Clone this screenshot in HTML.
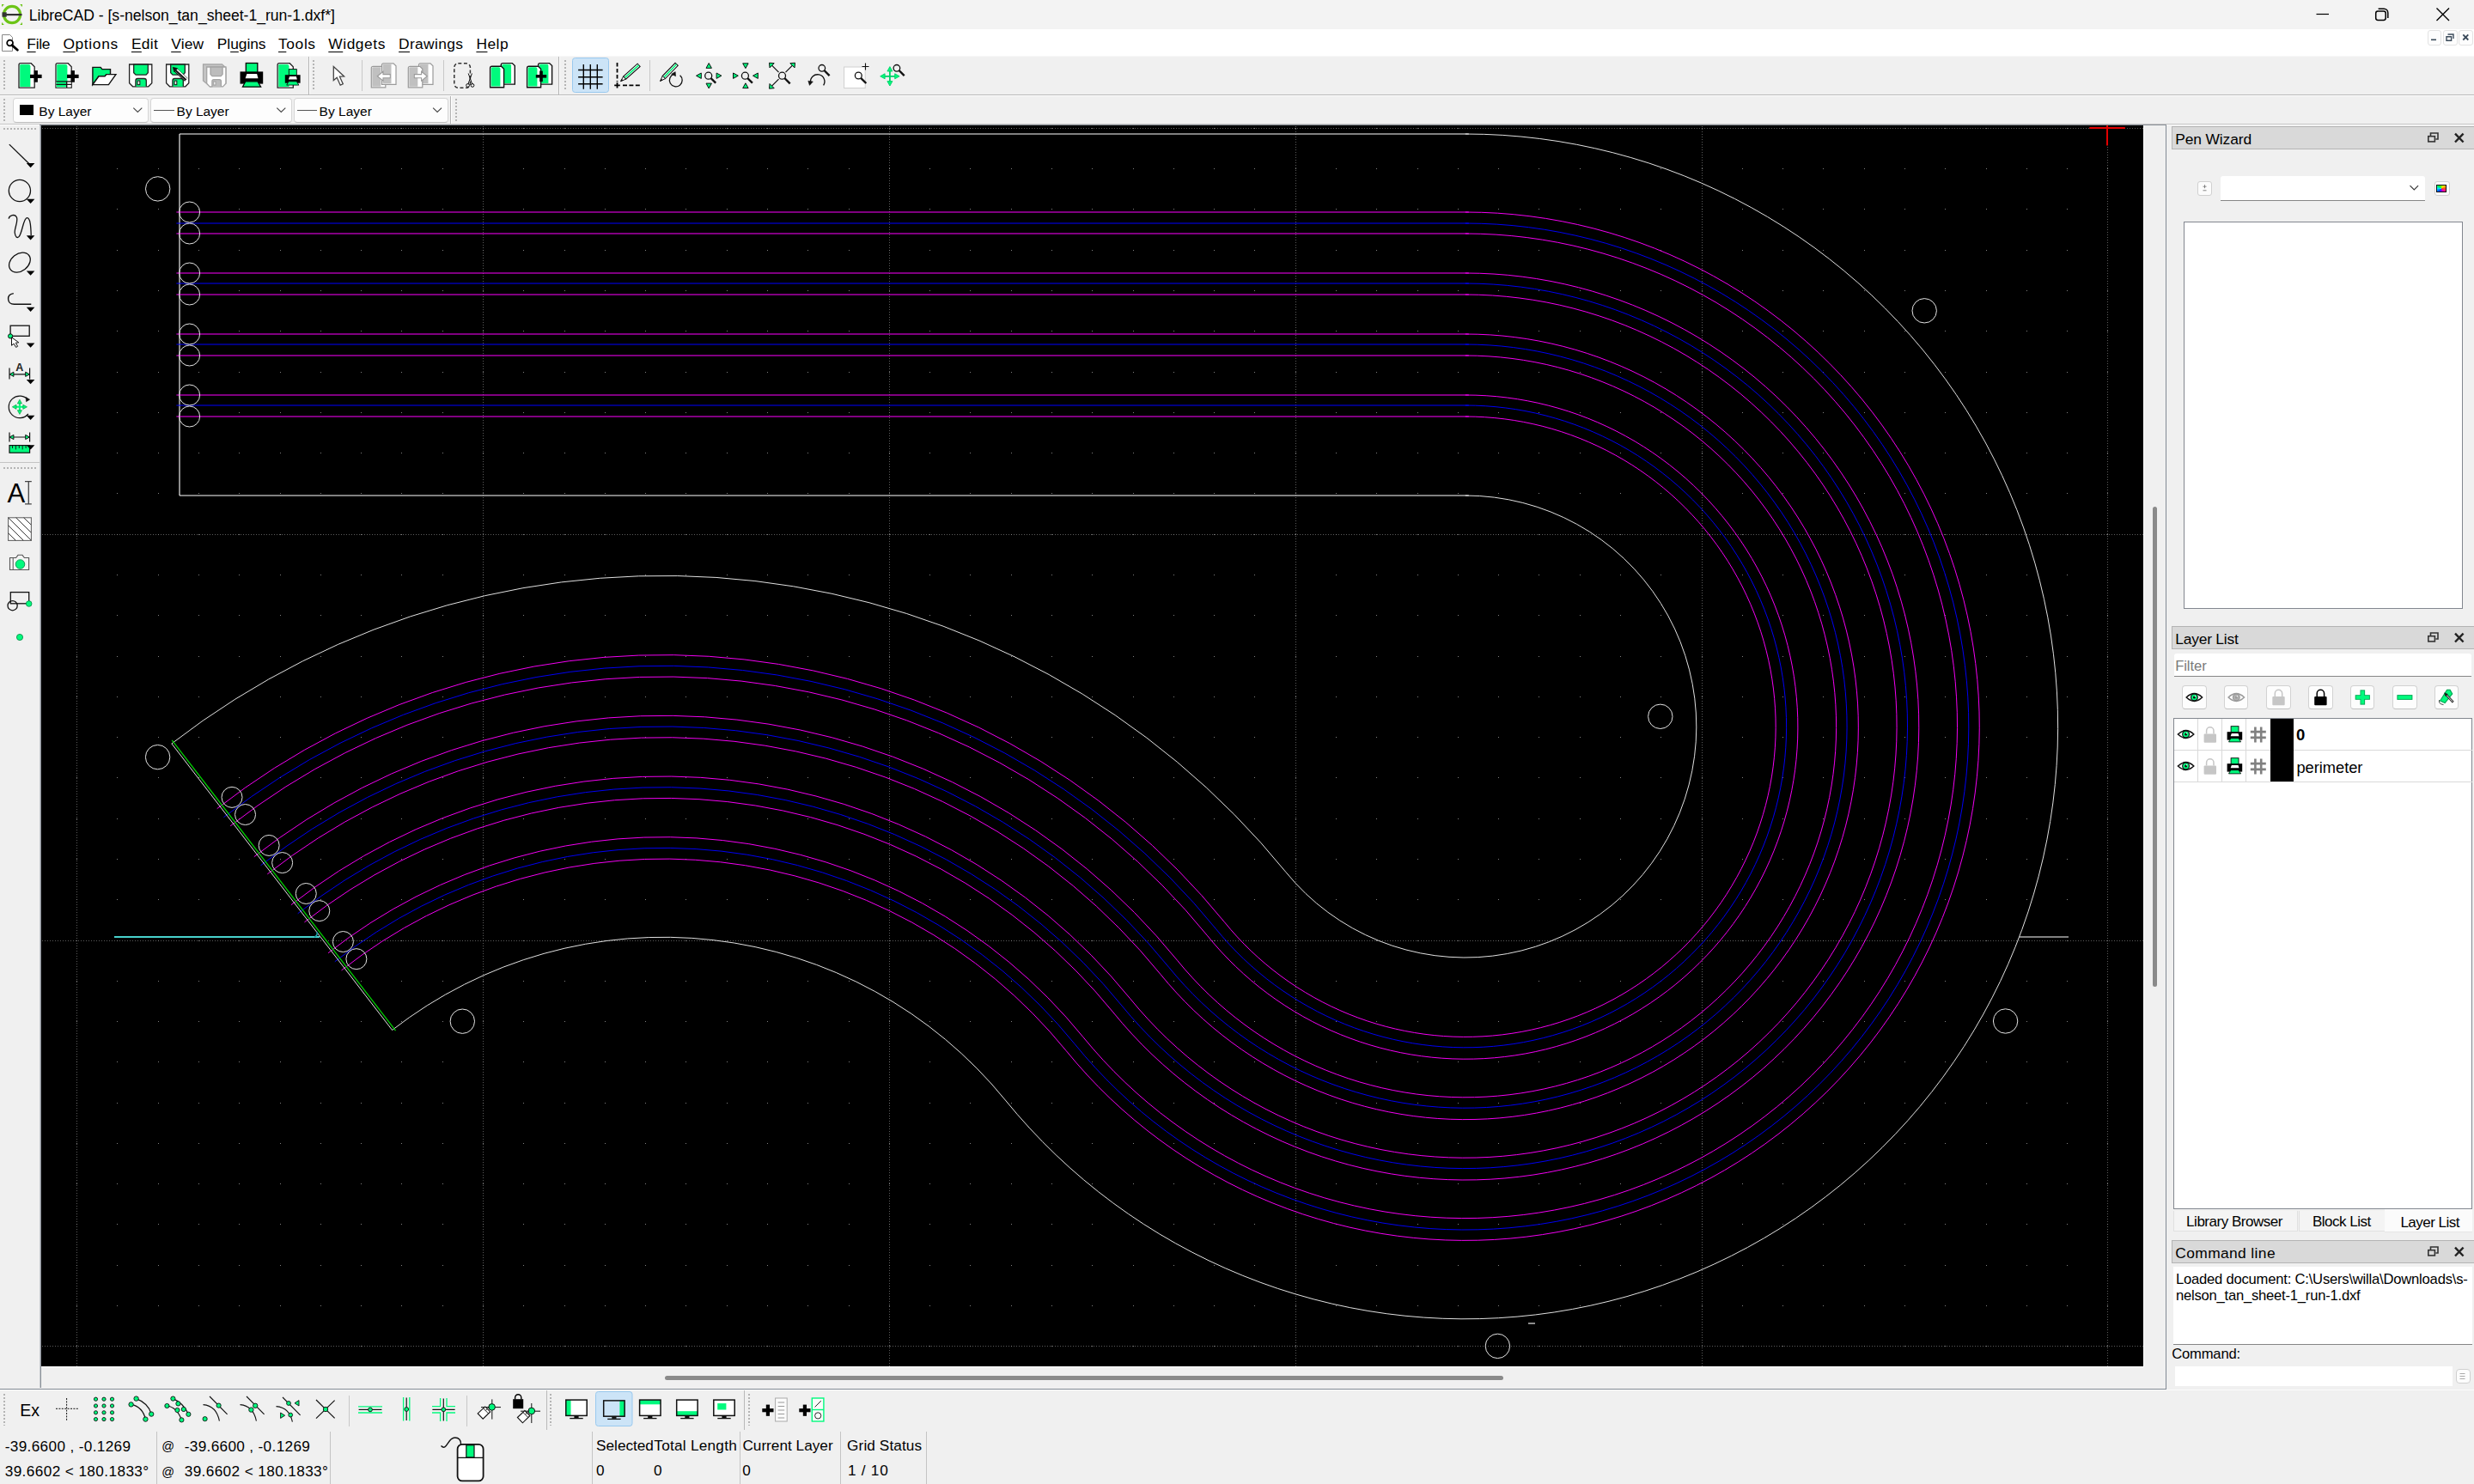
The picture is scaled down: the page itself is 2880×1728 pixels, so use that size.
<!DOCTYPE html>
<html><head><meta charset="utf-8"><title>LibreCAD</title>
<style>
html,body{margin:0;padding:0;overflow:hidden}
body{width:2880px;height:1728px;overflow:hidden;background:#f0f0f0;font-family:"Liberation Sans",sans-serif;font-size:17px;color:#000;position:relative}
.a{position:absolute;box-sizing:content-box}
.t{position:absolute;white-space:nowrap;line-height:1}
svg{position:absolute;overflow:visible}
</style></head><body>
<div class="a" style="left:0px;top:0px;width:2880px;height:34px;background:#f3f3f3"></div>
<svg style="left:2px;top:5px" width="24" height="24" viewBox="0 0 24 24"><circle cx="12" cy="12" r="9.6" fill="#f3f3f3" stroke="#6cc417" stroke-width="3.2"/><path d="M0 0h2.4v1.2H1.2v1.2H0zM24 0h-2.4v1.2h1.2v1.2H24zM0 24h2.4v-1.2H1.2v-1.2H0zM24 24h-2.4v-1.2h1.2v-1.2H24z" fill="#6cc417"/><rect x="0.5" y="9.3" width="5.2" height="5.4" fill="#333"/><rect x="4" y="11" width="19.5" height="2.2" fill="#333"/></svg>
<div class="t" style="left:33.8px;top:10.0px;font-size:17.6px;letter-spacing:-0.019px;">LibreCAD - [s-nelson_tan_sheet-1_run-1.dxf*]</div>
<svg style="left:2680px;top:0px" width="200" height="34" viewBox="0 0 200 34"><path d="M16.5 16.5H31" stroke="#000" stroke-width="1.2" fill="none"/><rect x="85.7" y="13" width="11.5" height="10.5" rx="2.4" fill="none" stroke="#000" stroke-width="1.5"/><path d="M88.6 10.3h6.6a4.6 4.6 0 0 1 4.6 4.6v6.2" fill="none" stroke="#000" stroke-width="1.5"/><path d="M156.5 9.5L171 24M171 9.5L156.5 24" stroke="#000" stroke-width="1.4" fill="none"/></svg>
<div class="a" style="left:0px;top:34px;width:2880px;height:31px;background:#fff"></div>
<div class="a" style="left:0px;top:65px;width:2880px;height:1px;background:#f7f7f7"></div>
<svg style="left:0px;top:38px" width="24" height="24" viewBox="0 0 24 24"><path d="M2.5 2.5h9l3 3v16h-12z" fill="#fff" stroke="#888" stroke-width="1"/><circle cx="11.6" cy="12" r="3.4" fill="#fff" stroke="#000" stroke-width="1.8"/><path d="M14 14.6l6.4 5.6" stroke="#000" stroke-width="2.8" stroke-linecap="round"/></svg>
<div class="t" style="left:31.3px;top:43.0px;font-size:17.4px;letter-spacing:-0.309px;text-underline-offset:2.5px;"><u>F</u>ile</div>
<div class="t" style="left:73.4px;top:43.0px;font-size:17.4px;letter-spacing:0.634px;text-underline-offset:2.5px;"><u>O</u>ptions</div>
<div class="t" style="left:152.9px;top:43.0px;font-size:17.4px;letter-spacing:0.329px;text-underline-offset:2.5px;"><u>E</u>dit</div>
<div class="t" style="left:199.2px;top:43.0px;font-size:17.4px;letter-spacing:0.150px;text-underline-offset:2.5px;"><u>V</u>iew</div>
<div class="t" style="left:252.8px;top:43.0px;font-size:17.4px;letter-spacing:-0.052px;text-underline-offset:2.5px;">Pl<u>u</u>gins</div>
<div class="t" style="left:324.0px;top:43.0px;font-size:17.4px;letter-spacing:0.616px;text-underline-offset:2.5px;"><u>T</u>ools</div>
<div class="t" style="left:382.3px;top:43.0px;font-size:17.4px;letter-spacing:0.535px;text-underline-offset:2.5px;"><u>W</u>idgets</div>
<div class="t" style="left:464.1px;top:43.0px;font-size:17.4px;letter-spacing:0.323px;text-underline-offset:2.5px;"><u>D</u>rawings</div>
<div class="t" style="left:554.4px;top:43.0px;font-size:17.4px;letter-spacing:0.479px;text-underline-offset:2.5px;"><u>H</u>elp</div>
<div class="a" style="left:2825.5px;top:34.5px;width:14.5px;height:16px;border:1px solid #e3e3e3;border-radius:3px;background:#fdfdfd"></div>
<div class="a" style="left:2843.5px;top:34.5px;width:15.0px;height:16px;border:1px solid #e3e3e3;border-radius:3px;background:#fdfdfd"></div>
<div class="a" style="left:2861.5px;top:34.5px;width:15.0px;height:16px;border:1px solid #e3e3e3;border-radius:3px;background:#fdfdfd"></div>
<svg style="left:2825px;top:34px" width="54" height="18" viewBox="0 0 54 18"><path d="M5 12.3h6" stroke="#3a4a5a" stroke-width="1.6"/><path d="M24.5 6h6.5v5M23 8.8h5.6v4.4H23z" fill="none" stroke="#3a4a5a" stroke-width="1.4"/><path d="M42.3 6.3l6 6.2M48.3 6.3l-6 6.2" stroke="#3a4a5a" stroke-width="1.8"/></svg>
<div class="a" style="left:0px;top:110px;width:2880px;height:1px;background:#b8b8b8"></div>
<div class="a" style="left:0px;top:111px;width:2880px;height:1px;background:#fff"></div>
<div class="a" style="left:0px;top:144px;width:2880px;height:1px;background:#c4c4c4"></div>
<div class="a" style="left:0px;top:145px;width:46px;height:1px;background:#fff"></div>
<div class="a" style="left:46px;top:145px;width:2476px;height:1px;background:#8a9098"></div>
<div class="a" style="left:2522px;top:145px;width:358px;height:1px;background:#fbfbfb"></div>
<svg style="left:0;top:0" width="1100" height="112" viewBox="0 0 1100 112"><path d="M24.0 73.7H36.2L40.2 77.7V102.1H22.0V75.7Q22.0 73.7 24.0 73.7Z" fill="#fff" stroke="#222" stroke-width="1.3"/><path d="M24.6 74.9H33.4Q35.4 74.9 35.4 77.2V100.9H23.2V76.3Q23.2 74.9 24.6 74.9Z" fill="#00fa7d"/><rect x="35.0" y="86.8" width="13.6" height="4.2" fill="#000" stroke="none" stroke-width="1.2" rx="0"/><rect x="39.7" y="82.1" width="4.2" height="13.6" fill="#000" stroke="none" stroke-width="1.2" rx="0"/><path d="M67.0 73.7H79.2L83.2 77.7V102.1H65.0V75.7Q65.0 73.7 67.0 73.7Z" fill="#fff" stroke="#222" stroke-width="1.3"/><path d="M67.6 74.9H76.4Q78.4 74.9 78.4 77.2V100.9H66.2V76.3Q66.2 74.9 67.6 74.9Z" fill="#00fa7d"/><rect x="65.7" y="94.8" width="16.8" height="6.6" fill="#fff" stroke="none" stroke-width="1.2" rx="0"/><rect x="65.7" y="94.8" width="12.0" height="6.6" fill="#00fa7d" stroke="none" stroke-width="1.2" rx="0"/><path d="M65.3 94.8H83.1M65.3 98.39999999999999H83.1M77.7 94.8V101.89999999999999" fill="none" stroke="#111" stroke-width="1.3" /><rect x="78.0" y="86.8" width="13.6" height="4.2" fill="#000" stroke="none" stroke-width="1.2" rx="0"/><rect x="82.7" y="82.1" width="4.2" height="13.6" fill="#000" stroke="none" stroke-width="1.2" rx="0"/><path d="M107.9 78.4L117.1 78.4L118.9 80.6L128.5 80.6L128.5 86.6L123.9 86.6L122.1 88.8L115.0 88.8L107.9 98.6Z" fill="#00fa7d" stroke="#111" stroke-width="1.4" /><path d="M115.0 88.8L122.1 88.8L123.9 86.6L134.9 86.6L126.4 98.6L107.9 98.6Z" fill="#fff" stroke="#111" stroke-width="1.4" /><path d="M150.6 75.0L176.8 75.0L176.8 96.8L172.8 100.8L154.6 100.8L150.6 96.8Z" fill="#fff" stroke="#222" stroke-width="1.3" /><path d="M155.7 75.0L172.3 75.0L172.3 84.7L170.0 87.1L158.1 87.1L155.7 84.7Z" fill="#00fa7d" stroke="#222" stroke-width="1.3" /><path d="M157.9 100.8V93.9Q157.9 91.5 160.3 91.5H167.9Q170.3 91.5 170.3 93.9V100.8" fill="#00fa7d" stroke="#222" stroke-width="1.3"/><rect x="160.1" y="94.1" width="2.7" height="4.5" fill="#fff" stroke="#222" stroke-width="1.1" rx="0"/><path d="M193.6 75.0L219.8 75.0L219.8 96.8L215.8 100.8L197.6 100.8L193.6 96.8Z" fill="#fff" stroke="#222" stroke-width="1.3" /><path d="M198.7 75.0L215.3 75.0L215.3 84.7L213.0 87.1L201.1 87.1L198.7 84.7Z" fill="#00fa7d" stroke="#222" stroke-width="1.3" /><path d="M200.9 100.8V93.9Q200.9 91.5 203.3 91.5H210.9Q213.3 91.5 213.3 93.9V100.8" fill="#00fa7d" stroke="#222" stroke-width="1.3"/><rect x="203.1" y="94.1" width="2.7" height="4.5" fill="#fff" stroke="#222" stroke-width="1.1" rx="0"/><path d="M204.6 81.6L216.8 92.8" fill="none" stroke="#111" stroke-width="5.0" /><path d="M205.9 80.9L217.7 91.8" fill="none" stroke="#fff" stroke-width="1.5" /><path d="M204.2 83.2L215.6 93.8" fill="none" stroke="#777" stroke-width="1.0" /><path d="M201.2 78.3L206.6 79.6L202.7 83.8Z" fill="#111" stroke="#111" stroke-width="0.6" /><path d="M236.5 74.8L258.5 74.8L263.0 79.0L263.0 97.0L245.0 101.0L236.5 94.0Z" fill="#c4c4c4" stroke="#a4a4a4" stroke-width="1.2" /><path d="M240.7 78.0L262.9 78.0L262.9 97.3L259.5 100.9L244.1 100.9L240.7 97.3Z" fill="#fff" stroke="#a4a4a4" stroke-width="1.3" /><path d="M245.0 78.0L259.1 78.0L259.1 86.6L257.1 88.7L247.1 88.7L245.0 86.6Z" fill="#bcbcbc" stroke="#a4a4a4" stroke-width="1.3" /><path d="M246.9 100.9V94.8Q246.9 92.6 248.9 92.6H255.4Q257.4 92.6 257.4 94.8V100.9" fill="#bcbcbc" stroke="#a4a4a4" stroke-width="1.3"/><rect x="248.7" y="95.0" width="2.3" height="4.0" fill="#fff" stroke="#a4a4a4" stroke-width="1.1" rx="0"/><rect x="279.5" y="83.4" width="26.7" height="14.2" fill="#000" stroke="none" stroke-width="1.2" rx="0"/><rect x="286.3" y="73.5" width="13.5" height="10.5" fill="#00fa7d" stroke="#000" stroke-width="1.3" rx="0"/><path d="M287.4 85.9L299.1 85.9L300.5 91.2L285.6 91.2Z" fill="#fff" stroke="none" stroke-width="0" /><path d="M285.9 94.8L299.8 94.8L303.7 101.2L282.4 101.2Z" fill="#00fa7d" stroke="#000" stroke-width="1.2" /><path d="M325.1 73.7H337.3L341.3 77.7V102.1H323.1V75.7Q323.1 73.7 325.1 73.7Z" fill="#fff" stroke="#222" stroke-width="1.3"/><path d="M325.7 74.9H334.5Q336.5 74.9 336.5 77.2V100.9H324.3V76.3Q324.3 74.9 325.7 74.9Z" fill="#00fa7d"/><rect x="331.8" y="87.2" width="17.8" height="9.5" fill="#000" stroke="none" stroke-width="1.2" rx="0"/><rect x="336.3" y="80.6" width="9.0" height="7.0" fill="#00fa7d" stroke="#000" stroke-width="0.8671000000000001" rx="0"/><path d="M337.1 88.9L344.9 88.9L345.8 92.4L335.9 92.4Z" fill="#fff" stroke="none" stroke-width="0" /><path d="M336.1 94.8L345.3 94.8L347.9 99.1L333.7 99.1Z" fill="#00fa7d" stroke="#000" stroke-width="0.8004" /><path d="M388.3 77.6L388.3 93.6L392.2 90.3L396.2 99.2L399.3 97.8L395.4 89.2L400.6 88.9Z" fill="#fff" stroke="#444" stroke-width="1.3" /><path d="M434.3 77.3H445.8L448.8 80.3V101.8H432.3V79.3Q432.3 77.3 434.3 77.3Z" fill="#fff" stroke="#9a9a9a" stroke-width="1.2"/><path d="M434.3 78.3H443.3V100.8H433.3V79.3Z" fill="#c0c0c0"/><path d="M446.5 73.8H458.0L461.0 76.8V98.3H444.5V75.8Q444.5 73.8 446.5 73.8Z" fill="#fff" stroke="#9a9a9a" stroke-width="1.2"/><path d="M446.5 74.8H455.5V97.3H445.5V75.8Z" fill="#c0c0c0"/><path d="M439.3 88.7L446.0 83.2L446.0 86.6L454.3 86.6L454.3 90.8L446.0 90.8L446.0 94.2Z" fill="#fff" stroke="#9a9a9a" stroke-width="1.1" /><path d="M489.5 73.8H501.0L504.0 76.8V98.3H487.5V75.8Q487.5 73.8 489.5 73.8Z" fill="#fff" stroke="#9a9a9a" stroke-width="1.2"/><path d="M489.5 74.8H498.5V97.3H488.5V75.8Z" fill="#c0c0c0"/><path d="M477.3 77.3H488.8L491.8 80.3V101.8H475.3V79.3Q475.3 77.3 477.3 77.3Z" fill="#fff" stroke="#9a9a9a" stroke-width="1.2"/><path d="M477.3 78.3H486.3V100.8H476.3V79.3Z" fill="#c0c0c0"/><path d="M497.3 88.7L490.6 83.2L490.6 86.6L482.3 86.6L482.3 90.8L490.6 90.8L490.6 94.2Z" fill="#fff" stroke="#9a9a9a" stroke-width="1.1" /><rect x="528.8" y="73.8" width="18.6" height="28.4" rx="4.5" fill="none" stroke="#333" stroke-width="1.5" stroke-dasharray="4 2.6"/><path d="M545.2 85.5L549.8 98.2M549.4 85.5L544.8 98.2" fill="none" stroke="#111" stroke-width="1.0" /><circle cx="544.6" cy="99.4" r="1.9" fill="none" stroke="#111" stroke-width="1.0"/><circle cx="550.0" cy="99.4" r="1.9" fill="none" stroke="#111" stroke-width="1.0"/><path d="M585.3 73.6H596.3L599.3 76.6V98.1H583.3V75.6Q583.3 73.6 585.3 73.6Z" fill="#fff" stroke="#111" stroke-width="1.4"/><path d="M585.6999999999999 74.69999999999999H593.3Q595.0999999999999 74.69999999999999 595.0999999999999 76.6V97.0H584.4V76.0Z" fill="#00fa7d"/><path d="M572.6 77.2H583.6L586.6 80.2V101.7H570.6V79.2Q570.6 77.2 572.6 77.2Z" fill="#fff" stroke="#111" stroke-width="1.4"/><path d="M573.0 78.3H580.6Q582.4 78.3 582.4 80.2V100.60000000000001H571.7V79.60000000000001Z" fill="#00fa7d"/><path d="M628.6 73.6H639.6L642.6 76.6V98.1H626.6V75.6Q626.6 73.6 628.6 73.6Z" fill="#fff" stroke="#111" stroke-width="1.4"/><path d="M629.0 74.69999999999999H636.6Q638.4 74.69999999999999 638.4 76.6V97.0H627.7V76.0Z" fill="#00fa7d"/><path d="M615.6 77.2H626.6L629.6 80.2V101.7H613.6V79.2Q613.6 77.2 615.6 77.2Z" fill="#fff" stroke="#111" stroke-width="1.4"/><path d="M616.0 78.3H623.6Q625.4 78.3 625.4 80.2V100.60000000000001H614.7V79.60000000000001Z" fill="#00fa7d"/><rect x="623.8" y="87.0" width="12.4" height="3.6" fill="#000" stroke="none" stroke-width="1.2" rx="0"/><rect x="628.2" y="82.6" width="3.6" height="12.4" fill="#000" stroke="none" stroke-width="1.2" rx="0"/><rect x="666.5" y="67.5" width="42.0" height="40.0" fill="#cce4f7" stroke="#99c9ef" stroke-width="1" rx="3"/><path d="M679.3 74.9V103.7M687.3 74.9V103.7M695.3 74.9V103.7M673.1 81.5H701.6M673.1 89.7H701.6M673.1 97.7H701.6" fill="none" stroke="#000" stroke-width="1.4" /><path d="M718.5 73V95" fill="none" stroke="#000" stroke-width="1.8" stroke-dasharray="4.5 2.5"/><path d="M725 99.3H745.5" fill="none" stroke="#000" stroke-width="1.8" stroke-dasharray="5 2.4"/><path d="M715.2 99.3H721.8M718.5 96V102.6" fill="none" stroke="#000" stroke-width="1.8" /><path d="M728.5 92.2L725.6 89.0L742.1 74.2L745.1 77.4Z" fill="#fff" stroke="#111" stroke-width="1.1" /><path d="M727.1 90.6L743.6 75.8" fill="none" stroke="#00fa7d" stroke-width="1.6" /><path d="M722.6 94.6L728.5 92.2L725.6 89.0Z" fill="#fff" stroke="#111" stroke-width="1.0" /><path d="M722.6 94.6L725.1 93.5L723.9 92.2Z" fill="#111" stroke="#111" stroke-width="0.5" /><path d="M774.4 91.6L771.2 88.6L786.0 73.3L789.2 76.3Z" fill="#fff" stroke="#111" stroke-width="1.1" /><path d="M772.8 90.1L787.6 74.8" fill="none" stroke="#00fa7d" stroke-width="1.6" /><path d="M768.6 94.4L774.4 91.6L771.2 88.6Z" fill="#fff" stroke="#111" stroke-width="1.0" /><path d="M768.6 94.4L771.1 93.2L769.8 91.9Z" fill="#111" stroke="#111" stroke-width="0.5" /><path d="M784.4 86.4A7.4 7.4 0 1 0 791.6 87.8" fill="none" stroke="#111" stroke-width="1.3" /><path d="M781.6 86.2L786.2 83.6L786.6 88.8Z" fill="#111" stroke="#111" stroke-width="0.5" /><circle cx="824.7" cy="88.2" r="4.0" fill="none" stroke="#111" stroke-width="1.3"/><path d="M827.5 91.0L833.2 96.7" fill="none" stroke="#111" stroke-width="2.4" /><path d="M825.2 73.5L828.4 79.3L822.0 79.3Z" fill="#00fa7d" stroke="#111" stroke-width="1.0" /><path d="M825.2 102.9L828.4 97.1L822.0 97.1Z" fill="#00fa7d" stroke="#111" stroke-width="1.0" /><path d="M810.5 88.2L816.3 85.0L816.3 91.4Z" fill="#00fa7d" stroke="#111" stroke-width="1.0" /><path d="M839.9 88.2L834.1 85.0L834.1 91.4Z" fill="#00fa7d" stroke="#111" stroke-width="1.0" /><circle cx="867.4" cy="88.2" r="4.0" fill="none" stroke="#111" stroke-width="1.3"/><path d="M870.2 91.0L875.9 96.7" fill="none" stroke="#111" stroke-width="2.4" /><path d="M867.9 79.6L871.1 73.8L864.7 73.8Z" fill="#00fa7d" stroke="#111" stroke-width="1.0" /><path d="M867.9 96.8L871.1 102.6L864.7 102.6Z" fill="#00fa7d" stroke="#111" stroke-width="1.0" /><path d="M859.3 88.2L853.5 85.0L853.5 91.4Z" fill="#00fa7d" stroke="#111" stroke-width="1.0" /><path d="M876.5 88.2L882.3 85.0L882.3 91.4Z" fill="#00fa7d" stroke="#111" stroke-width="1.0" /><path d="M906.5 84.2L897.0 74.7" fill="none" stroke="#111" stroke-width="1.2" /><path d="M895.5 73.2L901.2 73.7L896.0 78.9Z" fill="#00fa7d" stroke="#111" stroke-width="1.0" /><path d="M914.5 84.2L924.0 74.7" fill="none" stroke="#111" stroke-width="1.2" /><path d="M925.5 73.2L919.8 73.7L925.0 78.9Z" fill="#00fa7d" stroke="#111" stroke-width="1.0" /><path d="M906.5 92.2L897.0 101.7" fill="none" stroke="#111" stroke-width="1.2" /><path d="M895.5 103.2L901.2 102.7L896.0 97.5Z" fill="#00fa7d" stroke="#111" stroke-width="1.0" /><circle cx="910.5" cy="88.2" r="4.0" fill="none" stroke="#111" stroke-width="1.3"/><path d="M913.3 91.0L919.7 97.4" fill="none" stroke="#111" stroke-width="2.4" /><circle cx="956.8" cy="79.3" r="3.8" fill="none" stroke="#111" stroke-width="1.3"/><path d="M959.5 82.0L965.6 88.1" fill="none" stroke="#111" stroke-width="2.4" /><path d="M943.6 96.2A8.2 8.2 0 1 1 958.6 99.4" fill="none" stroke="#111" stroke-width="1.3" /><path d="M940.8 94.2L946.4 95.0L942.4 99.4Z" fill="#111" stroke="#111" stroke-width="0.5" /><rect x="982.6" y="78.0" width="24.6" height="24.6" fill="#fff" stroke="#cfcfcf" stroke-width="1" rx="0"/><circle cx="999.3" cy="88.0" r="3.9" fill="none" stroke="#111" stroke-width="1.3"/><path d="M1002.1 90.8L1008.3 97.0" fill="none" stroke="#111" stroke-width="2.4" /><path d="M1003.5 77.5H1011.5M1007.5 73.5V81.5" fill="none" stroke="#111" stroke-width="1.1" /><path d="M1027.9 88.8H1043.9M1035.9 80.8V96.8" fill="none" stroke="#00d068" stroke-width="1.8" /><path d="M1035.9 77.6L1038.9 83.0L1032.9 83.0Z" fill="#00fa7d" stroke="#00d068" stroke-width="0.9" /><path d="M1035.9 100.0L1038.9 94.6L1032.9 94.6Z" fill="#00fa7d" stroke="#00d068" stroke-width="0.9" /><path d="M1024.7 88.8L1030.1 85.8L1030.1 91.8Z" fill="#00fa7d" stroke="#00d068" stroke-width="0.9" /><path d="M1047.1 88.8L1041.7 85.8L1041.7 91.8Z" fill="#00fa7d" stroke="#00d068" stroke-width="0.9" /><circle cx="1043.9" cy="79.3" r="3.8" fill="none" stroke="#111" stroke-width="1.3"/><path d="M1046.6 82.0L1052.7 88.1" fill="none" stroke="#111" stroke-width="2.4" /></svg>
<div class="a" style="left:4px;top:70px;width:2px;height:36px;background:repeating-linear-gradient(to bottom,#b4b4b4 0 2px,transparent 2px 4px)"></div>
<div class="a" style="left:359px;top:66px;width:1px;height:44px;background:#b4b4b4"></div>
<div class="a" style="left:360px;top:66px;width:1px;height:44px;background:#fff"></div>
<div class="a" style="left:364px;top:70px;width:2px;height:36px;background:repeating-linear-gradient(to bottom,#b4b4b4 0 2px,transparent 2px 4px)"></div>
<div class="a" style="left:421px;top:70px;width:1px;height:36px;background:#c8c8c8"></div>
<div class="a" style="left:516px;top:70px;width:1px;height:36px;background:#c8c8c8"></div>
<div class="a" style="left:650px;top:66px;width:1px;height:44px;background:#b4b4b4"></div>
<div class="a" style="left:651px;top:66px;width:1px;height:44px;background:#fff"></div>
<div class="a" style="left:656.5px;top:70px;width:2px;height:36px;background:repeating-linear-gradient(to bottom,#b4b4b4 0 2px,transparent 2px 4px)"></div>
<div class="a" style="left:756px;top:70px;width:1px;height:36px;background:#c8c8c8"></div>
<div class="a" style="left:4px;top:115px;width:2px;height:26px;background:repeating-linear-gradient(to bottom,#b4b4b4 0 2px,transparent 2px 4px)"></div>
<div class="a" style="left:14.6px;top:114px;width:156.6px;height:26.5px;background:#fdfdfd;border:1px solid #d6d6d6;border-bottom-color:#bcbcbc;border-radius:4px"></div>
<div class="a" style="left:174.6px;top:114px;width:163.6px;height:26.5px;background:#fdfdfd;border:1px solid #d6d6d6;border-bottom-color:#bcbcbc;border-radius:4px"></div>
<div class="a" style="left:341.5px;top:114px;width:178.89999999999998px;height:26.5px;background:#fdfdfd;border:1px solid #d6d6d6;border-bottom-color:#bcbcbc;border-radius:4px"></div>
<div class="a" style="left:22.8px;top:122.2px;width:16.2px;height:11.6px;background:#000"></div>
<div class="a" style="left:179px;top:127.6px;width:24px;height:1px;background:#555"></div>
<div class="a" style="left:346.4px;top:127.6px;width:22.6px;height:1px;background:#555"></div>
<div class="t" style="left:45.3px;top:122.0px;font-size:15.5px;letter-spacing:0.004px;">By Layer</div>
<div class="t" style="left:205.6px;top:122.0px;font-size:15.5px;letter-spacing:-0.021px;">By Layer</div>
<div class="t" style="left:371.6px;top:122.0px;font-size:15.5px;letter-spacing:0.017px;">By Layer</div>
<svg style="left:0px;top:110px" width="540" height="36" viewBox="0 110 540 36"><path d="M155.3 125.6L160.3 130.4L165.3 125.6" fill="none" stroke="#444" stroke-width="1.1"/><path d="M322.3 125.6L327.3 130.4L332.3 125.6" fill="none" stroke="#444" stroke-width="1.1"/><path d="M504.1 125.6L509.1 130.4L514.1 125.6" fill="none" stroke="#444" stroke-width="1.1"/></svg>
<div class="a" style="left:524px;top:112px;width:1px;height:32px;background:#b4b4b4"></div>
<div class="a" style="left:525px;top:112px;width:1px;height:32px;background:#fff"></div>
<div class="a" style="left:529.5px;top:115px;width:2px;height:26px;background:repeating-linear-gradient(to bottom,#b4b4b4 0 2px,transparent 2px 4px)"></div>
<svg style="left:0;top:146px" width="47" height="640" viewBox="0 146 47 640"><path d="M10.8 168.1L34 190.8" fill="none" stroke="#111" stroke-width="1.3" /><path d="M30.8 190.0L40.4 190.0L35.6 195.2Z" fill="#000" stroke="none" stroke-width="0" /><circle cx="22.9" cy="222.0" r="12.6" fill="none" stroke="#111" stroke-width="1.3"/><path d="M30.8 231.8L40.4 231.8L35.6 237.0Z" fill="#000" stroke="none" stroke-width="0" /><path d="M10.1 254.6C11 251 17.4 248.4 19.4 253C21.4 258 16.6 266 17.2 271C17.8 276 20 277.6 22 275.6C26 271.6 27 254 31.5 253.6C35.5 253.2 36 266 36.2 274" fill="none" stroke="#111" stroke-width="1.3" /><path d="M30.8 274.2L40.4 274.2L35.6 279.4Z" fill="#000" stroke="none" stroke-width="0" /><ellipse cx="22.9" cy="305.6" rx="13.6" ry="10" transform="rotate(-38 22.9 305.6)" fill="none" stroke="#111" stroke-width="1.3"/><path d="M30.8 315.6L40.4 315.6L35.6 320.8Z" fill="#000" stroke="none" stroke-width="0" /><path d="M15.8 341.6C11 342.5 9.2 345 9.6 348.5C10 352.5 13 354.3 16.5 354.3H36.3" fill="none" stroke="#111" stroke-width="1.4" /><path d="M30.8 357.8L40.4 357.8L35.6 363.0Z" fill="#000" stroke="none" stroke-width="0" /><rect x="12.1" y="379.2" width="22.1" height="12.1" fill="none" stroke="#111" stroke-width="1.3" rx="0"/><circle cx="12.1" cy="391.4" r="2.6" fill="#00fa7d" stroke="#111" stroke-width="1.0"/><path d="M13.5 392.8L13.5 402.3L16.2 400.2L18.6 404.4L20.6 403.3L18.3 399.2L21.8 398.8Z" fill="#fff" stroke="#111" stroke-width="1.0" /><path d="M30.8 399.6L40.4 399.6L35.6 404.8Z" fill="#000" stroke="none" stroke-width="0" /><path d="M11 428.5V441.5M34.6 428.5V441.5M11 435.8H34.6" fill="none" stroke="#111" stroke-width="1.2" /><path d="M11.2 435.8L15.9 433.2L15.9 438.4Z" fill="#00fa7d" stroke="#111" stroke-width="1.0" /><path d="M34.4 435.8L29.7 433.2L29.7 438.4Z" fill="#00fa7d" stroke="#111" stroke-width="1.0" /><text x="22.8" y="431.6" font-family="Liberation Sans,sans-serif" font-weight="bold" font-size="12.5" text-anchor="middle" fill="#222">A</text><path d="M30.8 442.0L40.4 442.0L35.6 447.2Z" fill="#000" stroke="none" stroke-width="0" /><path d="M33.1 466.0A12.8 12.8 0 1 0 32.9 482.0" fill="none" stroke="#111" stroke-width="1.2" /><path d="M30.1 462.4L34.7 465.2L30.5 467.8Z" fill="#111" stroke="#111" stroke-width="0.5" /><path d="M16.9 473.8H28.9M22.9 467.8V479.8" fill="none" stroke="#00fa7d" stroke-width="2.0" /><path d="M22.9 465.2L25.5 469.9L20.3 469.9Z" fill="#00fa7d" stroke="#093" stroke-width="0.6" /><path d="M22.9 482.4L25.5 477.7L20.3 477.7Z" fill="#00fa7d" stroke="#093" stroke-width="0.6" /><path d="M14.3 473.8L19.0 471.2L19.0 476.4Z" fill="#00fa7d" stroke="#093" stroke-width="0.6" /><path d="M31.5 473.8L26.8 471.2L26.8 476.4Z" fill="#00fa7d" stroke="#093" stroke-width="0.6" /><path d="M30.8 483.8L40.4 483.8L35.6 489.0Z" fill="#000" stroke="none" stroke-width="0" /><path d="M11 503.5V514.5M34.6 503.5V514.5M11 509H34.6" fill="none" stroke="#111" stroke-width="1.2" /><path d="M11.2 509.0L15.9 506.4L15.9 511.6Z" fill="#00fa7d" stroke="#111" stroke-width="1.0" /><path d="M34.4 509.0L29.7 506.4L29.7 511.6Z" fill="#00fa7d" stroke="#111" stroke-width="1.0" /><rect x="11.0" y="518.6" width="23.6" height="8.6" fill="#00fa7d" stroke="#111" stroke-width="1.2" rx="0"/><path d="M14.5 518.6V522M18.4 518.6V523.4M22.3 518.6V522M26.2 518.6V523.4M30.1 518.6V522" fill="none" stroke="#111" stroke-width="0.9" /><path d="M30.8 518.3L40.4 518.3L35.6 523.5Z" fill="#000" stroke="none" stroke-width="0" /><text x="8.6" y="585.2" font-family="Liberation Sans,sans-serif" font-size="31" fill="#000">A</text><path d="M33.3 560.6V586.8M29 560.6H36.8M29 586.8H36.8" fill="none" stroke="#444" stroke-width="1.3" /><rect x="9.6" y="602.8" width="26.8" height="26.6" fill="#fff" stroke="#666" stroke-width="1.1" rx="0"/><path d="M9.6 602.8L36.2 629.0M18.6 602.8L36.2 620.0M27.6 602.8L36.2 611.0M9.6 611.8L27.200000000000003 629.2M9.6 620.8L18.200000000000003 629.2" fill="none" stroke="#333" stroke-width="1.0" /><path d="M11.5 649.5L18.6 649.5L21.0 646.3L26.0 646.3L28.4 649.5L33.6 649.5L33.6 663.5L11.5 663.5Z" fill="#f4f4f4" stroke="#555" stroke-width="1.1" /><path d="M15.2 649.5V663.5" fill="none" stroke="#555" stroke-width="1.0" /><circle cx="23.5" cy="657.0" r="5.3" fill="#00fa7d" stroke="#084" stroke-width="0.8"/><rect x="12.3" y="689.6" width="21.4" height="13.2" fill="none" stroke="#111" stroke-width="1.3" rx="0"/><circle cx="14.6" cy="705.2" r="5.6" fill="none" stroke="#111" stroke-width="1.3"/><circle cx="33.7" cy="703.0" r="3.3" fill="#00fa7d" stroke="#084" stroke-width="0.8"/><circle cx="23.0" cy="742.0" r="3.6" fill="#00fa7d" stroke="#084" stroke-width="0.8"/></svg>
<div class="a" style="left:4px;top:149px;width:39px;height:2px;background:repeating-linear-gradient(to right,#b4b4b4 0 2px,transparent 2px 4px)"></div>
<div class="a" style="left:0px;top:538px;width:46px;height:1px;background:#c4c4c4"></div>
<div class="a" style="left:4px;top:543.5px;width:39px;height:2px;background:repeating-linear-gradient(to right,#b4b4b4 0 2px,transparent 2px 4px)"></div>
<div class="a" style="left:46px;top:146px;width:1px;height:1470px;background:#c4c8cc"></div>
<div class="a" style="left:47px;top:146px;width:1px;height:1470px;background:#8a9098"></div>
<svg class="cv" width="2447" height="1445" viewBox="48 146 2447 1445" style="position:absolute;left:48px;top:146px;background:#000;overflow:hidden">
<path d="M2453.5 147V1591M1981.5 147V1591M1508.5 147V1591M1035.5 147V1591M562.5 147V1591M89.5 147V1591M49 149.5H2495M49 622.5H2495M49 1095.5H2495M49 1567.5H2495" stroke="#5c5c5c" stroke-width="1" stroke-dasharray="1 2" shape-rendering="crispEdges" fill="none"/>
<path d="M2453 149.5h1M2406 149.5h1M2359 149.5h1M2312 149.5h1M2264 149.5h1M2217 149.5h1M2170 149.5h1M2122 149.5h1M2075 149.5h1M2028 149.5h1M1981 149.5h1M1933 149.5h1M1886 149.5h1M1839 149.5h1M1791 149.5h1M1744 149.5h1M1697 149.5h1M1650 149.5h1M1602 149.5h1M1555 149.5h1M1508 149.5h1M1460 149.5h1M1413 149.5h1M1366 149.5h1M1319 149.5h1M1271 149.5h1M1224 149.5h1M1177 149.5h1M1129 149.5h1M1082 149.5h1M1035 149.5h1M988 149.5h1M940 149.5h1M893 149.5h1M846 149.5h1M798 149.5h1M751 149.5h1M704 149.5h1M657 149.5h1M609 149.5h1M562 149.5h1M515 149.5h1M467 149.5h1M420 149.5h1M373 149.5h1M326 149.5h1M278 149.5h1M231 149.5h1M184 149.5h1M136 149.5h1M89 149.5h1M2453 196.5h1M2406 196.5h1M2359 196.5h1M2312 196.5h1M2264 196.5h1M2217 196.5h1M2170 196.5h1M2122 196.5h1M2075 196.5h1M2028 196.5h1M1981 196.5h1M1933 196.5h1M1886 196.5h1M1839 196.5h1M1791 196.5h1M1744 196.5h1M1697 196.5h1M1650 196.5h1M1602 196.5h1M1555 196.5h1M1508 196.5h1M1460 196.5h1M1413 196.5h1M1366 196.5h1M1319 196.5h1M1271 196.5h1M1224 196.5h1M1177 196.5h1M1129 196.5h1M1082 196.5h1M1035 196.5h1M988 196.5h1M940 196.5h1M893 196.5h1M846 196.5h1M798 196.5h1M751 196.5h1M704 196.5h1M657 196.5h1M609 196.5h1M562 196.5h1M515 196.5h1M467 196.5h1M420 196.5h1M373 196.5h1M326 196.5h1M278 196.5h1M231 196.5h1M184 196.5h1M136 196.5h1M89 196.5h1M2453 243.5h1M2406 243.5h1M2359 243.5h1M2312 243.5h1M2264 243.5h1M2217 243.5h1M2170 243.5h1M2122 243.5h1M2075 243.5h1M2028 243.5h1M1981 243.5h1M1933 243.5h1M1886 243.5h1M1839 243.5h1M1791 243.5h1M1744 243.5h1M1697 243.5h1M1650 243.5h1M1602 243.5h1M1555 243.5h1M1508 243.5h1M1460 243.5h1M1413 243.5h1M1366 243.5h1M1319 243.5h1M1271 243.5h1M1224 243.5h1M1177 243.5h1M1129 243.5h1M1082 243.5h1M1035 243.5h1M988 243.5h1M940 243.5h1M893 243.5h1M846 243.5h1M798 243.5h1M751 243.5h1M704 243.5h1M657 243.5h1M609 243.5h1M562 243.5h1M515 243.5h1M467 243.5h1M420 243.5h1M373 243.5h1M326 243.5h1M278 243.5h1M231 243.5h1M184 243.5h1M136 243.5h1M89 243.5h1M2453 291.5h1M2406 291.5h1M2359 291.5h1M2312 291.5h1M2264 291.5h1M2217 291.5h1M2170 291.5h1M2122 291.5h1M2075 291.5h1M2028 291.5h1M1981 291.5h1M1933 291.5h1M1886 291.5h1M1839 291.5h1M1791 291.5h1M1744 291.5h1M1697 291.5h1M1650 291.5h1M1602 291.5h1M1555 291.5h1M1508 291.5h1M1460 291.5h1M1413 291.5h1M1366 291.5h1M1319 291.5h1M1271 291.5h1M1224 291.5h1M1177 291.5h1M1129 291.5h1M1082 291.5h1M1035 291.5h1M988 291.5h1M940 291.5h1M893 291.5h1M846 291.5h1M798 291.5h1M751 291.5h1M704 291.5h1M657 291.5h1M609 291.5h1M562 291.5h1M515 291.5h1M467 291.5h1M420 291.5h1M373 291.5h1M326 291.5h1M278 291.5h1M231 291.5h1M184 291.5h1M136 291.5h1M89 291.5h1M2453 338.5h1M2406 338.5h1M2359 338.5h1M2312 338.5h1M2264 338.5h1M2217 338.5h1M2170 338.5h1M2122 338.5h1M2075 338.5h1M2028 338.5h1M1981 338.5h1M1933 338.5h1M1886 338.5h1M1839 338.5h1M1791 338.5h1M1744 338.5h1M1697 338.5h1M1650 338.5h1M1602 338.5h1M1555 338.5h1M1508 338.5h1M1460 338.5h1M1413 338.5h1M1366 338.5h1M1319 338.5h1M1271 338.5h1M1224 338.5h1M1177 338.5h1M1129 338.5h1M1082 338.5h1M1035 338.5h1M988 338.5h1M940 338.5h1M893 338.5h1M846 338.5h1M798 338.5h1M751 338.5h1M704 338.5h1M657 338.5h1M609 338.5h1M562 338.5h1M515 338.5h1M467 338.5h1M420 338.5h1M373 338.5h1M326 338.5h1M278 338.5h1M231 338.5h1M184 338.5h1M136 338.5h1M89 338.5h1M2453 385.5h1M2406 385.5h1M2359 385.5h1M2312 385.5h1M2264 385.5h1M2217 385.5h1M2170 385.5h1M2122 385.5h1M2075 385.5h1M2028 385.5h1M1981 385.5h1M1933 385.5h1M1886 385.5h1M1839 385.5h1M1791 385.5h1M1744 385.5h1M1697 385.5h1M1650 385.5h1M1602 385.5h1M1555 385.5h1M1508 385.5h1M1460 385.5h1M1413 385.5h1M1366 385.5h1M1319 385.5h1M1271 385.5h1M1224 385.5h1M1177 385.5h1M1129 385.5h1M1082 385.5h1M1035 385.5h1M988 385.5h1M940 385.5h1M893 385.5h1M846 385.5h1M798 385.5h1M751 385.5h1M704 385.5h1M657 385.5h1M609 385.5h1M562 385.5h1M515 385.5h1M467 385.5h1M420 385.5h1M373 385.5h1M326 385.5h1M278 385.5h1M231 385.5h1M184 385.5h1M136 385.5h1M89 385.5h1M2453 433.5h1M2406 433.5h1M2359 433.5h1M2312 433.5h1M2264 433.5h1M2217 433.5h1M2170 433.5h1M2122 433.5h1M2075 433.5h1M2028 433.5h1M1981 433.5h1M1933 433.5h1M1886 433.5h1M1839 433.5h1M1791 433.5h1M1744 433.5h1M1697 433.5h1M1650 433.5h1M1602 433.5h1M1555 433.5h1M1508 433.5h1M1460 433.5h1M1413 433.5h1M1366 433.5h1M1319 433.5h1M1271 433.5h1M1224 433.5h1M1177 433.5h1M1129 433.5h1M1082 433.5h1M1035 433.5h1M988 433.5h1M940 433.5h1M893 433.5h1M846 433.5h1M798 433.5h1M751 433.5h1M704 433.5h1M657 433.5h1M609 433.5h1M562 433.5h1M515 433.5h1M467 433.5h1M420 433.5h1M373 433.5h1M326 433.5h1M278 433.5h1M231 433.5h1M184 433.5h1M136 433.5h1M89 433.5h1M2453 480.5h1M2406 480.5h1M2359 480.5h1M2312 480.5h1M2264 480.5h1M2217 480.5h1M2170 480.5h1M2122 480.5h1M2075 480.5h1M2028 480.5h1M1981 480.5h1M1933 480.5h1M1886 480.5h1M1839 480.5h1M1791 480.5h1M1744 480.5h1M1697 480.5h1M1650 480.5h1M1602 480.5h1M1555 480.5h1M1508 480.5h1M1460 480.5h1M1413 480.5h1M1366 480.5h1M1319 480.5h1M1271 480.5h1M1224 480.5h1M1177 480.5h1M1129 480.5h1M1082 480.5h1M1035 480.5h1M988 480.5h1M940 480.5h1M893 480.5h1M846 480.5h1M798 480.5h1M751 480.5h1M704 480.5h1M657 480.5h1M609 480.5h1M562 480.5h1M515 480.5h1M467 480.5h1M420 480.5h1M373 480.5h1M326 480.5h1M278 480.5h1M231 480.5h1M184 480.5h1M136 480.5h1M89 480.5h1M2453 527.5h1M2406 527.5h1M2359 527.5h1M2312 527.5h1M2264 527.5h1M2217 527.5h1M2170 527.5h1M2122 527.5h1M2075 527.5h1M2028 527.5h1M1981 527.5h1M1933 527.5h1M1886 527.5h1M1839 527.5h1M1791 527.5h1M1744 527.5h1M1697 527.5h1M1650 527.5h1M1602 527.5h1M1555 527.5h1M1508 527.5h1M1460 527.5h1M1413 527.5h1M1366 527.5h1M1319 527.5h1M1271 527.5h1M1224 527.5h1M1177 527.5h1M1129 527.5h1M1082 527.5h1M1035 527.5h1M988 527.5h1M940 527.5h1M893 527.5h1M846 527.5h1M798 527.5h1M751 527.5h1M704 527.5h1M657 527.5h1M609 527.5h1M562 527.5h1M515 527.5h1M467 527.5h1M420 527.5h1M373 527.5h1M326 527.5h1M278 527.5h1M231 527.5h1M184 527.5h1M136 527.5h1M89 527.5h1M2453 574.5h1M2406 574.5h1M2359 574.5h1M2312 574.5h1M2264 574.5h1M2217 574.5h1M2170 574.5h1M2122 574.5h1M2075 574.5h1M2028 574.5h1M1981 574.5h1M1933 574.5h1M1886 574.5h1M1839 574.5h1M1791 574.5h1M1744 574.5h1M1697 574.5h1M1650 574.5h1M1602 574.5h1M1555 574.5h1M1508 574.5h1M1460 574.5h1M1413 574.5h1M1366 574.5h1M1319 574.5h1M1271 574.5h1M1224 574.5h1M1177 574.5h1M1129 574.5h1M1082 574.5h1M1035 574.5h1M988 574.5h1M940 574.5h1M893 574.5h1M846 574.5h1M798 574.5h1M751 574.5h1M704 574.5h1M657 574.5h1M609 574.5h1M562 574.5h1M515 574.5h1M467 574.5h1M420 574.5h1M373 574.5h1M326 574.5h1M278 574.5h1M231 574.5h1M184 574.5h1M136 574.5h1M89 574.5h1M2453 622.5h1M2406 622.5h1M2359 622.5h1M2312 622.5h1M2264 622.5h1M2217 622.5h1M2170 622.5h1M2122 622.5h1M2075 622.5h1M2028 622.5h1M1981 622.5h1M1933 622.5h1M1886 622.5h1M1839 622.5h1M1791 622.5h1M1744 622.5h1M1697 622.5h1M1650 622.5h1M1602 622.5h1M1555 622.5h1M1508 622.5h1M1460 622.5h1M1413 622.5h1M1366 622.5h1M1319 622.5h1M1271 622.5h1M1224 622.5h1M1177 622.5h1M1129 622.5h1M1082 622.5h1M1035 622.5h1M988 622.5h1M940 622.5h1M893 622.5h1M846 622.5h1M798 622.5h1M751 622.5h1M704 622.5h1M657 622.5h1M609 622.5h1M562 622.5h1M515 622.5h1M467 622.5h1M420 622.5h1M373 622.5h1M326 622.5h1M278 622.5h1M231 622.5h1M184 622.5h1M136 622.5h1M89 622.5h1M2453 669.5h1M2406 669.5h1M2359 669.5h1M2312 669.5h1M2264 669.5h1M2217 669.5h1M2170 669.5h1M2122 669.5h1M2075 669.5h1M2028 669.5h1M1981 669.5h1M1933 669.5h1M1886 669.5h1M1839 669.5h1M1791 669.5h1M1744 669.5h1M1697 669.5h1M1650 669.5h1M1602 669.5h1M1555 669.5h1M1508 669.5h1M1460 669.5h1M1413 669.5h1M1366 669.5h1M1319 669.5h1M1271 669.5h1M1224 669.5h1M1177 669.5h1M1129 669.5h1M1082 669.5h1M1035 669.5h1M988 669.5h1M940 669.5h1M893 669.5h1M846 669.5h1M798 669.5h1M751 669.5h1M704 669.5h1M657 669.5h1M609 669.5h1M562 669.5h1M515 669.5h1M467 669.5h1M420 669.5h1M373 669.5h1M326 669.5h1M278 669.5h1M231 669.5h1M184 669.5h1M136 669.5h1M89 669.5h1M2453 716.5h1M2406 716.5h1M2359 716.5h1M2312 716.5h1M2264 716.5h1M2217 716.5h1M2170 716.5h1M2122 716.5h1M2075 716.5h1M2028 716.5h1M1981 716.5h1M1933 716.5h1M1886 716.5h1M1839 716.5h1M1791 716.5h1M1744 716.5h1M1697 716.5h1M1650 716.5h1M1602 716.5h1M1555 716.5h1M1508 716.5h1M1460 716.5h1M1413 716.5h1M1366 716.5h1M1319 716.5h1M1271 716.5h1M1224 716.5h1M1177 716.5h1M1129 716.5h1M1082 716.5h1M1035 716.5h1M988 716.5h1M940 716.5h1M893 716.5h1M846 716.5h1M798 716.5h1M751 716.5h1M704 716.5h1M657 716.5h1M609 716.5h1M562 716.5h1M515 716.5h1M467 716.5h1M420 716.5h1M373 716.5h1M326 716.5h1M278 716.5h1M231 716.5h1M184 716.5h1M136 716.5h1M89 716.5h1M2453 764.5h1M2406 764.5h1M2359 764.5h1M2312 764.5h1M2264 764.5h1M2217 764.5h1M2170 764.5h1M2122 764.5h1M2075 764.5h1M2028 764.5h1M1981 764.5h1M1933 764.5h1M1886 764.5h1M1839 764.5h1M1791 764.5h1M1744 764.5h1M1697 764.5h1M1650 764.5h1M1602 764.5h1M1555 764.5h1M1508 764.5h1M1460 764.5h1M1413 764.5h1M1366 764.5h1M1319 764.5h1M1271 764.5h1M1224 764.5h1M1177 764.5h1M1129 764.5h1M1082 764.5h1M1035 764.5h1M988 764.5h1M940 764.5h1M893 764.5h1M846 764.5h1M798 764.5h1M751 764.5h1M704 764.5h1M657 764.5h1M609 764.5h1M562 764.5h1M515 764.5h1M467 764.5h1M420 764.5h1M373 764.5h1M326 764.5h1M278 764.5h1M231 764.5h1M184 764.5h1M136 764.5h1M89 764.5h1M2453 811.5h1M2406 811.5h1M2359 811.5h1M2312 811.5h1M2264 811.5h1M2217 811.5h1M2170 811.5h1M2122 811.5h1M2075 811.5h1M2028 811.5h1M1981 811.5h1M1933 811.5h1M1886 811.5h1M1839 811.5h1M1791 811.5h1M1744 811.5h1M1697 811.5h1M1650 811.5h1M1602 811.5h1M1555 811.5h1M1508 811.5h1M1460 811.5h1M1413 811.5h1M1366 811.5h1M1319 811.5h1M1271 811.5h1M1224 811.5h1M1177 811.5h1M1129 811.5h1M1082 811.5h1M1035 811.5h1M988 811.5h1M940 811.5h1M893 811.5h1M846 811.5h1M798 811.5h1M751 811.5h1M704 811.5h1M657 811.5h1M609 811.5h1M562 811.5h1M515 811.5h1M467 811.5h1M420 811.5h1M373 811.5h1M326 811.5h1M278 811.5h1M231 811.5h1M184 811.5h1M136 811.5h1M89 811.5h1M2453 858.5h1M2406 858.5h1M2359 858.5h1M2312 858.5h1M2264 858.5h1M2217 858.5h1M2170 858.5h1M2122 858.5h1M2075 858.5h1M2028 858.5h1M1981 858.5h1M1933 858.5h1M1886 858.5h1M1839 858.5h1M1791 858.5h1M1744 858.5h1M1697 858.5h1M1650 858.5h1M1602 858.5h1M1555 858.5h1M1508 858.5h1M1460 858.5h1M1413 858.5h1M1366 858.5h1M1319 858.5h1M1271 858.5h1M1224 858.5h1M1177 858.5h1M1129 858.5h1M1082 858.5h1M1035 858.5h1M988 858.5h1M940 858.5h1M893 858.5h1M846 858.5h1M798 858.5h1M751 858.5h1M704 858.5h1M657 858.5h1M609 858.5h1M562 858.5h1M515 858.5h1M467 858.5h1M420 858.5h1M373 858.5h1M326 858.5h1M278 858.5h1M231 858.5h1M184 858.5h1M136 858.5h1M89 858.5h1M2453 905.5h1M2406 905.5h1M2359 905.5h1M2312 905.5h1M2264 905.5h1M2217 905.5h1M2170 905.5h1M2122 905.5h1M2075 905.5h1M2028 905.5h1M1981 905.5h1M1933 905.5h1M1886 905.5h1M1839 905.5h1M1791 905.5h1M1744 905.5h1M1697 905.5h1M1650 905.5h1M1602 905.5h1M1555 905.5h1M1508 905.5h1M1460 905.5h1M1413 905.5h1M1366 905.5h1M1319 905.5h1M1271 905.5h1M1224 905.5h1M1177 905.5h1M1129 905.5h1M1082 905.5h1M1035 905.5h1M988 905.5h1M940 905.5h1M893 905.5h1M846 905.5h1M798 905.5h1M751 905.5h1M704 905.5h1M657 905.5h1M609 905.5h1M562 905.5h1M515 905.5h1M467 905.5h1M420 905.5h1M373 905.5h1M326 905.5h1M278 905.5h1M231 905.5h1M184 905.5h1M136 905.5h1M89 905.5h1M2453 953.5h1M2406 953.5h1M2359 953.5h1M2312 953.5h1M2264 953.5h1M2217 953.5h1M2170 953.5h1M2122 953.5h1M2075 953.5h1M2028 953.5h1M1981 953.5h1M1933 953.5h1M1886 953.5h1M1839 953.5h1M1791 953.5h1M1744 953.5h1M1697 953.5h1M1650 953.5h1M1602 953.5h1M1555 953.5h1M1508 953.5h1M1460 953.5h1M1413 953.5h1M1366 953.5h1M1319 953.5h1M1271 953.5h1M1224 953.5h1M1177 953.5h1M1129 953.5h1M1082 953.5h1M1035 953.5h1M988 953.5h1M940 953.5h1M893 953.5h1M846 953.5h1M798 953.5h1M751 953.5h1M704 953.5h1M657 953.5h1M609 953.5h1M562 953.5h1M515 953.5h1M467 953.5h1M420 953.5h1M373 953.5h1M326 953.5h1M278 953.5h1M231 953.5h1M184 953.5h1M136 953.5h1M89 953.5h1M2453 1000.5h1M2406 1000.5h1M2359 1000.5h1M2312 1000.5h1M2264 1000.5h1M2217 1000.5h1M2170 1000.5h1M2122 1000.5h1M2075 1000.5h1M2028 1000.5h1M1981 1000.5h1M1933 1000.5h1M1886 1000.5h1M1839 1000.5h1M1791 1000.5h1M1744 1000.5h1M1697 1000.5h1M1650 1000.5h1M1602 1000.5h1M1555 1000.5h1M1508 1000.5h1M1460 1000.5h1M1413 1000.5h1M1366 1000.5h1M1319 1000.5h1M1271 1000.5h1M1224 1000.5h1M1177 1000.5h1M1129 1000.5h1M1082 1000.5h1M1035 1000.5h1M988 1000.5h1M940 1000.5h1M893 1000.5h1M846 1000.5h1M798 1000.5h1M751 1000.5h1M704 1000.5h1M657 1000.5h1M609 1000.5h1M562 1000.5h1M515 1000.5h1M467 1000.5h1M420 1000.5h1M373 1000.5h1M326 1000.5h1M278 1000.5h1M231 1000.5h1M184 1000.5h1M136 1000.5h1M89 1000.5h1M2453 1047.5h1M2406 1047.5h1M2359 1047.5h1M2312 1047.5h1M2264 1047.5h1M2217 1047.5h1M2170 1047.5h1M2122 1047.5h1M2075 1047.5h1M2028 1047.5h1M1981 1047.5h1M1933 1047.5h1M1886 1047.5h1M1839 1047.5h1M1791 1047.5h1M1744 1047.5h1M1697 1047.5h1M1650 1047.5h1M1602 1047.5h1M1555 1047.5h1M1508 1047.5h1M1460 1047.5h1M1413 1047.5h1M1366 1047.5h1M1319 1047.5h1M1271 1047.5h1M1224 1047.5h1M1177 1047.5h1M1129 1047.5h1M1082 1047.5h1M1035 1047.5h1M988 1047.5h1M940 1047.5h1M893 1047.5h1M846 1047.5h1M798 1047.5h1M751 1047.5h1M704 1047.5h1M657 1047.5h1M609 1047.5h1M562 1047.5h1M515 1047.5h1M467 1047.5h1M420 1047.5h1M373 1047.5h1M326 1047.5h1M278 1047.5h1M231 1047.5h1M184 1047.5h1M136 1047.5h1M89 1047.5h1M2453 1095.5h1M2406 1095.5h1M2359 1095.5h1M2312 1095.5h1M2264 1095.5h1M2217 1095.5h1M2170 1095.5h1M2122 1095.5h1M2075 1095.5h1M2028 1095.5h1M1981 1095.5h1M1933 1095.5h1M1886 1095.5h1M1839 1095.5h1M1791 1095.5h1M1744 1095.5h1M1697 1095.5h1M1650 1095.5h1M1602 1095.5h1M1555 1095.5h1M1508 1095.5h1M1460 1095.5h1M1413 1095.5h1M1366 1095.5h1M1319 1095.5h1M1271 1095.5h1M1224 1095.5h1M1177 1095.5h1M1129 1095.5h1M1082 1095.5h1M1035 1095.5h1M988 1095.5h1M940 1095.5h1M893 1095.5h1M846 1095.5h1M798 1095.5h1M751 1095.5h1M704 1095.5h1M657 1095.5h1M609 1095.5h1M562 1095.5h1M515 1095.5h1M467 1095.5h1M420 1095.5h1M373 1095.5h1M326 1095.5h1M278 1095.5h1M231 1095.5h1M184 1095.5h1M136 1095.5h1M89 1095.5h1M2453 1142.5h1M2406 1142.5h1M2359 1142.5h1M2312 1142.5h1M2264 1142.5h1M2217 1142.5h1M2170 1142.5h1M2122 1142.5h1M2075 1142.5h1M2028 1142.5h1M1981 1142.5h1M1933 1142.5h1M1886 1142.5h1M1839 1142.5h1M1791 1142.5h1M1744 1142.5h1M1697 1142.5h1M1650 1142.5h1M1602 1142.5h1M1555 1142.5h1M1508 1142.5h1M1460 1142.5h1M1413 1142.5h1M1366 1142.5h1M1319 1142.5h1M1271 1142.5h1M1224 1142.5h1M1177 1142.5h1M1129 1142.5h1M1082 1142.5h1M1035 1142.5h1M988 1142.5h1M940 1142.5h1M893 1142.5h1M846 1142.5h1M798 1142.5h1M751 1142.5h1M704 1142.5h1M657 1142.5h1M609 1142.5h1M562 1142.5h1M515 1142.5h1M467 1142.5h1M420 1142.5h1M373 1142.5h1M326 1142.5h1M278 1142.5h1M231 1142.5h1M184 1142.5h1M136 1142.5h1M89 1142.5h1M2453 1189.5h1M2406 1189.5h1M2359 1189.5h1M2312 1189.5h1M2264 1189.5h1M2217 1189.5h1M2170 1189.5h1M2122 1189.5h1M2075 1189.5h1M2028 1189.5h1M1981 1189.5h1M1933 1189.5h1M1886 1189.5h1M1839 1189.5h1M1791 1189.5h1M1744 1189.5h1M1697 1189.5h1M1650 1189.5h1M1602 1189.5h1M1555 1189.5h1M1508 1189.5h1M1460 1189.5h1M1413 1189.5h1M1366 1189.5h1M1319 1189.5h1M1271 1189.5h1M1224 1189.5h1M1177 1189.5h1M1129 1189.5h1M1082 1189.5h1M1035 1189.5h1M988 1189.5h1M940 1189.5h1M893 1189.5h1M846 1189.5h1M798 1189.5h1M751 1189.5h1M704 1189.5h1M657 1189.5h1M609 1189.5h1M562 1189.5h1M515 1189.5h1M467 1189.5h1M420 1189.5h1M373 1189.5h1M326 1189.5h1M278 1189.5h1M231 1189.5h1M184 1189.5h1M136 1189.5h1M89 1189.5h1M2453 1236.5h1M2406 1236.5h1M2359 1236.5h1M2312 1236.5h1M2264 1236.5h1M2217 1236.5h1M2170 1236.5h1M2122 1236.5h1M2075 1236.5h1M2028 1236.5h1M1981 1236.5h1M1933 1236.5h1M1886 1236.5h1M1839 1236.5h1M1791 1236.5h1M1744 1236.5h1M1697 1236.5h1M1650 1236.5h1M1602 1236.5h1M1555 1236.5h1M1508 1236.5h1M1460 1236.5h1M1413 1236.5h1M1366 1236.5h1M1319 1236.5h1M1271 1236.5h1M1224 1236.5h1M1177 1236.5h1M1129 1236.5h1M1082 1236.5h1M1035 1236.5h1M988 1236.5h1M940 1236.5h1M893 1236.5h1M846 1236.5h1M798 1236.5h1M751 1236.5h1M704 1236.5h1M657 1236.5h1M609 1236.5h1M562 1236.5h1M515 1236.5h1M467 1236.5h1M420 1236.5h1M373 1236.5h1M326 1236.5h1M278 1236.5h1M231 1236.5h1M184 1236.5h1M136 1236.5h1M89 1236.5h1M2453 1284.5h1M2406 1284.5h1M2359 1284.5h1M2312 1284.5h1M2264 1284.5h1M2217 1284.5h1M2170 1284.5h1M2122 1284.5h1M2075 1284.5h1M2028 1284.5h1M1981 1284.5h1M1933 1284.5h1M1886 1284.5h1M1839 1284.5h1M1791 1284.5h1M1744 1284.5h1M1697 1284.5h1M1650 1284.5h1M1602 1284.5h1M1555 1284.5h1M1508 1284.5h1M1460 1284.5h1M1413 1284.5h1M1366 1284.5h1M1319 1284.5h1M1271 1284.5h1M1224 1284.5h1M1177 1284.5h1M1129 1284.5h1M1082 1284.5h1M1035 1284.5h1M988 1284.5h1M940 1284.5h1M893 1284.5h1M846 1284.5h1M798 1284.5h1M751 1284.5h1M704 1284.5h1M657 1284.5h1M609 1284.5h1M562 1284.5h1M515 1284.5h1M467 1284.5h1M420 1284.5h1M373 1284.5h1M326 1284.5h1M278 1284.5h1M231 1284.5h1M184 1284.5h1M136 1284.5h1M89 1284.5h1M2453 1331.5h1M2406 1331.5h1M2359 1331.5h1M2312 1331.5h1M2264 1331.5h1M2217 1331.5h1M2170 1331.5h1M2122 1331.5h1M2075 1331.5h1M2028 1331.5h1M1981 1331.5h1M1933 1331.5h1M1886 1331.5h1M1839 1331.5h1M1791 1331.5h1M1744 1331.5h1M1697 1331.5h1M1650 1331.5h1M1602 1331.5h1M1555 1331.5h1M1508 1331.5h1M1460 1331.5h1M1413 1331.5h1M1366 1331.5h1M1319 1331.5h1M1271 1331.5h1M1224 1331.5h1M1177 1331.5h1M1129 1331.5h1M1082 1331.5h1M1035 1331.5h1M988 1331.5h1M940 1331.5h1M893 1331.5h1M846 1331.5h1M798 1331.5h1M751 1331.5h1M704 1331.5h1M657 1331.5h1M609 1331.5h1M562 1331.5h1M515 1331.5h1M467 1331.5h1M420 1331.5h1M373 1331.5h1M326 1331.5h1M278 1331.5h1M231 1331.5h1M184 1331.5h1M136 1331.5h1M89 1331.5h1M2453 1378.5h1M2406 1378.5h1M2359 1378.5h1M2312 1378.5h1M2264 1378.5h1M2217 1378.5h1M2170 1378.5h1M2122 1378.5h1M2075 1378.5h1M2028 1378.5h1M1981 1378.5h1M1933 1378.5h1M1886 1378.5h1M1839 1378.5h1M1791 1378.5h1M1744 1378.5h1M1697 1378.5h1M1650 1378.5h1M1602 1378.5h1M1555 1378.5h1M1508 1378.5h1M1460 1378.5h1M1413 1378.5h1M1366 1378.5h1M1319 1378.5h1M1271 1378.5h1M1224 1378.5h1M1177 1378.5h1M1129 1378.5h1M1082 1378.5h1M1035 1378.5h1M988 1378.5h1M940 1378.5h1M893 1378.5h1M846 1378.5h1M798 1378.5h1M751 1378.5h1M704 1378.5h1M657 1378.5h1M609 1378.5h1M562 1378.5h1M515 1378.5h1M467 1378.5h1M420 1378.5h1M373 1378.5h1M326 1378.5h1M278 1378.5h1M231 1378.5h1M184 1378.5h1M136 1378.5h1M89 1378.5h1M2453 1425.5h1M2406 1425.5h1M2359 1425.5h1M2312 1425.5h1M2264 1425.5h1M2217 1425.5h1M2170 1425.5h1M2122 1425.5h1M2075 1425.5h1M2028 1425.5h1M1981 1425.5h1M1933 1425.5h1M1886 1425.5h1M1839 1425.5h1M1791 1425.5h1M1744 1425.5h1M1697 1425.5h1M1650 1425.5h1M1602 1425.5h1M1555 1425.5h1M1508 1425.5h1M1460 1425.5h1M1413 1425.5h1M1366 1425.5h1M1319 1425.5h1M1271 1425.5h1M1224 1425.5h1M1177 1425.5h1M1129 1425.5h1M1082 1425.5h1M1035 1425.5h1M988 1425.5h1M940 1425.5h1M893 1425.5h1M846 1425.5h1M798 1425.5h1M751 1425.5h1M704 1425.5h1M657 1425.5h1M609 1425.5h1M562 1425.5h1M515 1425.5h1M467 1425.5h1M420 1425.5h1M373 1425.5h1M326 1425.5h1M278 1425.5h1M231 1425.5h1M184 1425.5h1M136 1425.5h1M89 1425.5h1M2453 1473.5h1M2406 1473.5h1M2359 1473.5h1M2312 1473.5h1M2264 1473.5h1M2217 1473.5h1M2170 1473.5h1M2122 1473.5h1M2075 1473.5h1M2028 1473.5h1M1981 1473.5h1M1933 1473.5h1M1886 1473.5h1M1839 1473.5h1M1791 1473.5h1M1744 1473.5h1M1697 1473.5h1M1650 1473.5h1M1602 1473.5h1M1555 1473.5h1M1508 1473.5h1M1460 1473.5h1M1413 1473.5h1M1366 1473.5h1M1319 1473.5h1M1271 1473.5h1M1224 1473.5h1M1177 1473.5h1M1129 1473.5h1M1082 1473.5h1M1035 1473.5h1M988 1473.5h1M940 1473.5h1M893 1473.5h1M846 1473.5h1M798 1473.5h1M751 1473.5h1M704 1473.5h1M657 1473.5h1M609 1473.5h1M562 1473.5h1M515 1473.5h1M467 1473.5h1M420 1473.5h1M373 1473.5h1M326 1473.5h1M278 1473.5h1M231 1473.5h1M184 1473.5h1M136 1473.5h1M89 1473.5h1M2453 1520.5h1M2406 1520.5h1M2359 1520.5h1M2312 1520.5h1M2264 1520.5h1M2217 1520.5h1M2170 1520.5h1M2122 1520.5h1M2075 1520.5h1M2028 1520.5h1M1981 1520.5h1M1933 1520.5h1M1886 1520.5h1M1839 1520.5h1M1791 1520.5h1M1744 1520.5h1M1697 1520.5h1M1650 1520.5h1M1602 1520.5h1M1555 1520.5h1M1508 1520.5h1M1460 1520.5h1M1413 1520.5h1M1366 1520.5h1M1319 1520.5h1M1271 1520.5h1M1224 1520.5h1M1177 1520.5h1M1129 1520.5h1M1082 1520.5h1M1035 1520.5h1M988 1520.5h1M940 1520.5h1M893 1520.5h1M846 1520.5h1M798 1520.5h1M751 1520.5h1M704 1520.5h1M657 1520.5h1M609 1520.5h1M562 1520.5h1M515 1520.5h1M467 1520.5h1M420 1520.5h1M373 1520.5h1M326 1520.5h1M278 1520.5h1M231 1520.5h1M184 1520.5h1M136 1520.5h1M89 1520.5h1M2453 1567.5h1M2406 1567.5h1M2359 1567.5h1M2312 1567.5h1M2264 1567.5h1M2217 1567.5h1M2170 1567.5h1M2122 1567.5h1M2075 1567.5h1M2028 1567.5h1M1981 1567.5h1M1933 1567.5h1M1886 1567.5h1M1839 1567.5h1M1791 1567.5h1M1744 1567.5h1M1697 1567.5h1M1650 1567.5h1M1602 1567.5h1M1555 1567.5h1M1508 1567.5h1M1460 1567.5h1M1413 1567.5h1M1366 1567.5h1M1319 1567.5h1M1271 1567.5h1M1224 1567.5h1M1177 1567.5h1M1129 1567.5h1M1082 1567.5h1M1035 1567.5h1M988 1567.5h1M940 1567.5h1M893 1567.5h1M846 1567.5h1M798 1567.5h1M751 1567.5h1M704 1567.5h1M657 1567.5h1M609 1567.5h1M562 1567.5h1M515 1567.5h1M467 1567.5h1M420 1567.5h1M373 1567.5h1M326 1567.5h1M278 1567.5h1M231 1567.5h1M184 1567.5h1M136 1567.5h1M89 1567.5h1" stroke="#808080" stroke-width="1" fill="none" shape-rendering="crispEdges"/>
<g fill="none" stroke-width="1.1">
<path d="M209 156H1709.8M209 577H1709.8M209 156V577" stroke="#fff"/>
<path d="M1705.8 156A689.9 689.9 0 1 1 1170.31 1280.99A513.42 513.42 0 0 0 456.55 1199.46M1705.8 577A269 269 0 1 1 1497.01 1015.61A934.32 934.32 0 0 0 199.85 865.9" stroke="#ececec" stroke-width="0.95"/>
<path d="M205.4 247H1709.8M205.4 272H1709.8M205.4 318H1709.8M205.4 343H1709.8M205.4 389H1709.8M205.4 414H1709.8M205.4 460H1709.8M205.4 485H1709.8" stroke="#f0f"/>
<path d="M1705.8 247A598.7 598.7 0 1 1 1241.1 1223.48A604.62 604.62 0 0 0 397.54 1129.84M1705.8 272A573.3 573.3 0 1 1 1260.81 1207.47A630.02 630.02 0 0 0 382.05 1109.71M1705.8 318A528 528 0 1 1 1295.97 1178.91A675.32 675.32 0 0 0 354.42 1073.8M1705.8 343A502.6 502.6 0 1 1 1315.69 1162.89A700.72 700.72 0 0 0 338.93 1053.67M1705.8 389A457.3 457.3 0 1 1 1350.85 1134.33A746.02 746.02 0 0 0 311.3 1017.77M1705.8 414A431.9 431.9 0 1 1 1370.57 1118.32A771.42 771.42 0 0 0 295.81 997.64M1705.8 460A386.6 386.6 0 1 1 1405.73 1089.75A816.72 816.72 0 0 0 268.18 961.74M1705.8 485A361.2 361.2 0 1 1 1425.44 1073.74A842.12 842.12 0 0 0 252.69 941.61" stroke="#f0f" stroke-width="0.95"/>
<path d="M205.4 260H1709.8M205.4 330H1709.8M205.4 401H1709.8M205.4 472H1709.8" stroke="#00f"/>
<path d="M1705.8 260A586 586 0 1 1 1250.96 1215.48A617.32 617.32 0 0 0 389.79 1119.77M1705.8 330A515.3 515.3 0 1 1 1305.83 1170.9A688.02 688.02 0 0 0 346.67 1063.74M1705.8 401A444.6 444.6 0 1 1 1360.71 1126.32A758.72 758.72 0 0 0 303.55 1007.71M1705.8 472A373.9 373.9 0 1 1 1415.58 1081.75A829.42 829.42 0 0 0 260.43 951.67" stroke="#00f" stroke-width="0.95"/>
<path d="M199.85 865.9L456.55 1199.46" stroke="#e4e4e4" stroke-width="1"/>
<path d="M200.16 861.87L460.51 1200.19" stroke="#00d000" stroke-width="1.3"/>
<path d="M133 1091H372" stroke="#48d1cc" stroke-width="2"/><path d="M366 1091Q369.5 1090 369.3 1085" stroke="#1a9aa0" stroke-width="1.6"/>
<path d="M2351 1091H2408" stroke="#fff"/>
<path d="M1779 1541H1787" stroke="#fff"/>
<g stroke="#e4e4e4" stroke-width="1"><circle cx="220.6" cy="247" r="12"/><circle cx="414.9" cy="1116.65" r="12"/><circle cx="220.6" cy="272" r="12"/><circle cx="399.4" cy="1096.52" r="12"/><circle cx="220.6" cy="318" r="12"/><circle cx="371.77" cy="1060.61" r="12"/><circle cx="220.6" cy="343" r="12"/><circle cx="356.28" cy="1040.48" r="12"/><circle cx="220.6" cy="389" r="12"/><circle cx="328.64" cy="1004.57" r="12"/><circle cx="220.6" cy="414" r="12"/><circle cx="313.15" cy="984.43" r="12"/><circle cx="220.6" cy="460" r="12"/><circle cx="285.52" cy="948.53" r="12"/><circle cx="220.6" cy="485" r="12"/><circle cx="270.02" cy="928.39" r="12"/><circle cx="183.7" cy="219.9" r="14.2"/><circle cx="183.6" cy="881.6" r="14.2"/><circle cx="538.3" cy="1189.2" r="14.2"/><circle cx="2240.2" cy="361.8" r="14.2"/><circle cx="1932.8" cy="834.3" r="14.2"/><circle cx="2334.6" cy="1189" r="14.2"/><circle cx="1743.4" cy="1567.4" r="14.2"/></g>
</g>
<path d="M2432.3 149H2473.8M2453 128V169.6" stroke="#e20000" stroke-width="2" fill="none"/>
</svg>
<div class="a" style="left:2521px;top:146px;width:1px;height:1471px;background:#828a94"></div>
<div class="a" style="left:2506px;top:590px;width:5px;height:559px;background:#8a8a8a;border-radius:2.5px"></div>
<div class="a" style="left:2528px;top:147px;width:352px;height:25px;background:#d9d9d9;border:1px solid #b4b4b4"></div>
<div class="t" style="left:2532.3px;top:154.0px;font-size:17.4px;letter-spacing:-0.123px;">Pen Wizard</div>
<svg style="left:2820px;top:147px" width="60" height="27" viewBox="2820 147 60 27"><path d="M2829.5 158.3v-3.3h8.5v7h-2.6" fill="none" stroke="#333" stroke-width="1.6"/><rect x="2826.8" y="158.7" width="7.6" height="6.2" fill="none" stroke="#333" stroke-width="1.6"/><path d="M2858 155.7l9.6 9.8M2867.6 155.7l-9.6 9.8" stroke="#222" stroke-width="2.4" fill="none"/></svg>
<div class="a" style="left:2558px;top:211px;width:15px;height:15px;border:1px solid #d0d0d0;border-radius:3px;background:#fcfcfc"></div>
<svg style="left:2558px;top:211px" width="17" height="17" viewBox="0 0 17 17"><path d="M6.5 6.2h4M8.5 4.2v4M6.5 10.8h4" stroke="#777" stroke-width="0.9" fill="none"/></svg>
<div class="a" style="left:2585px;top:205px;width:238px;height:28px;background:#fff;border-bottom:1px solid #868686;border-radius:3px 3px 0 0"></div>
<svg style="left:2800px;top:205px" width="24" height="28" viewBox="0 0 24 28"><path d="M5.5 11.2L10.3 16L15.1 11.2" fill="none" stroke="#333" stroke-width="1.1"/></svg>
<div class="a" style="left:2834px;top:211px;width:15.5px;height:15px;border:1px solid #d0d0d0;border-radius:3px;background:#fcfcfc"></div>
<div class="a" style="left:2836px;top:215px;width:12px;height:9px;background:conic-gradient(from 0deg,#7fff00,#ffe000 45deg,#ff5020 90deg,#ff00a0 135deg,#8000ff 180deg,#0050ff 225deg,#00e0ff 270deg,#00ff40 315deg,#7fff00);border:1px solid #111;box-sizing:border-box"></div>
<div class="a" style="left:2542px;top:257.5px;width:323px;height:449px;background:#fff;border:1px solid #82878f"></div>
<div class="a" style="left:2528px;top:728.5px;width:352px;height:25px;background:#d9d9d9;border:1px solid #b4b4b4"></div>
<div class="t" style="left:2532.3px;top:736.0px;font-size:17.4px;letter-spacing:-0.213px;">Layer List</div>
<svg style="left:2820px;top:728.5px" width="60" height="27" viewBox="2820 728.5 60 27"><path d="M2829.5 739.8v-3.3h8.5v7h-2.6" fill="none" stroke="#333" stroke-width="1.6"/><rect x="2826.8" y="740.2" width="7.6" height="6.2" fill="none" stroke="#333" stroke-width="1.6"/><path d="M2858 737.2l9.6 9.8M2867.6 737.2l-9.6 9.8" stroke="#222" stroke-width="2.4" fill="none"/></svg>
<div class="a" style="left:2531px;top:760.5px;width:346px;height:26.5px;background:#fff;border-bottom:1px solid #868686;border-radius:3px 3px 0 0"></div>
<div class="t" style="left:2532.2px;top:768.0px;font-size:16.6px;letter-spacing:-0.081px;color:#7a7a7a;">Filter</div>
<div class="a" style="left:2540.2px;top:798.4px;width:26.4px;height:25.6px;border:1px solid #d2d2d2;border-bottom-color:#c2c2c2;border-radius:4px;background:#fdfdfd"></div>
<div class="a" style="left:2589.1px;top:798.4px;width:26.4px;height:25.6px;border:1px solid #d2d2d2;border-bottom-color:#c2c2c2;border-radius:4px;background:#fdfdfd"></div>
<div class="a" style="left:2638.3px;top:798.4px;width:26.4px;height:25.6px;border:1px solid #d2d2d2;border-bottom-color:#c2c2c2;border-radius:4px;background:#fdfdfd"></div>
<div class="a" style="left:2687.2px;top:798.4px;width:26.4px;height:25.6px;border:1px solid #d2d2d2;border-bottom-color:#c2c2c2;border-radius:4px;background:#fdfdfd"></div>
<div class="a" style="left:2736.1px;top:798.4px;width:26.4px;height:25.6px;border:1px solid #d2d2d2;border-bottom-color:#c2c2c2;border-radius:4px;background:#fdfdfd"></div>
<div class="a" style="left:2785.2px;top:798.4px;width:26.4px;height:25.6px;border:1px solid #d2d2d2;border-bottom-color:#c2c2c2;border-radius:4px;background:#fdfdfd"></div>
<div class="a" style="left:2834.1px;top:798.4px;width:26.4px;height:25.6px;border:1px solid #d2d2d2;border-bottom-color:#c2c2c2;border-radius:4px;background:#fdfdfd"></div>
<svg style="left:2530px;top:796px" width="350" height="32" viewBox="2530 796 350 32"><path d="M2545.2 812.0Q2554.4 803.2 2563.6 812.0Q2554.4 820.8 2545.2 812.0Z" fill="#fff" stroke="#111" stroke-width="1.5"/><circle cx="2554.4" cy="812.0" r="3.9" fill="#00fa7d" stroke="#111" stroke-width="1.2"/><circle cx="2554.4" cy="812.0" r="1.5" fill="#111" stroke="none" stroke-width="0"/><circle cx="2555.4" cy="810.8" r="0.7" fill="#fff" stroke="none" stroke-width="0"/><path d="M2594.1 812.0Q2603.3 803.2 2612.5 812.0Q2603.3 820.8 2594.1 812.0Z" fill="#fff" stroke="#9a9a9a" stroke-width="1.5"/><circle cx="2603.3" cy="812.0" r="3.9" fill="#b0b0b0" stroke="#9a9a9a" stroke-width="1.2"/><circle cx="2603.3" cy="812.0" r="1.5" fill="#9a9a9a" stroke="none" stroke-width="0"/><circle cx="2604.3" cy="810.8" r="0.7" fill="#fff" stroke="none" stroke-width="0"/><path d="M2648.3 811.0v-3.6a4.2 4.2 0 0 1 8.4 0v3.6" fill="none" stroke="#c6c6c6" stroke-width="1.5"/><rect x="2645.3" y="811.0" width="14.4" height="10.2" fill="#c6c6c6" stroke="none" stroke-width="0" rx="1"/><path d="M2697.2 811.0v-3.6a4.2 4.2 0 0 1 8.4 0v3.6" fill="none" stroke="#000" stroke-width="1.5"/><rect x="2694.2" y="811.0" width="14.4" height="10.2" fill="#000" stroke="none" stroke-width="0" rx="1"/><rect x="2741.7" y="809.2" width="17.2" height="5.6" fill="#0a5" stroke="none" stroke-width="1.2" rx="0"/><rect x="2747.5" y="803.4" width="5.6" height="17.2" fill="#0a5" stroke="none" stroke-width="1.2" rx="0"/><rect x="2742.7" y="810.1" width="15.2" height="3.8" fill="#00fa7d" stroke="none" stroke-width="1.2" rx="0"/><rect x="2748.4" y="804.4" width="3.8" height="15.2" fill="#00fa7d" stroke="none" stroke-width="1.2" rx="0"/><rect x="2790.4" y="809.1" width="18.0" height="5.8" fill="#0a5" stroke="none" stroke-width="1.2" rx="0"/><rect x="2791.4" y="810.1" width="16.0" height="3.8" fill="#00fa7d" stroke="none" stroke-width="1.2" rx="0"/><path d="M2840.6 816.0L2848.6 803.4L2852.1 803.4L2854.7 808.0L2846.1 818.6Z" fill="#00fa7d" stroke="#0a5" stroke-width="1.2" /><path d="M2839.7 815Q2838.1 819.6 2844.5 820.6" fill="none" stroke="#333" stroke-width="0.9" /><path d="M2847.3 808.6L2855.7 817.6" fill="none" stroke="#222" stroke-width="2.6" /><path d="M2847.7 809L2855.1 817" fill="none" stroke="#fff" stroke-width="0.9" /><path d="M2845.7 806.8L2849.3 808.4L2846.9 810.6Z" fill="#111" stroke="#111" stroke-width="0.6" /></svg>
<div class="a" style="left:2530px;top:836px;width:346px;height:569.5px;background:#fff;border:1px solid #82878f"></div>
<div class="a" style="left:2531px;top:873px;width:347px;height:1px;background:#d9d9d9"></div>
<div class="a" style="left:2531px;top:910px;width:347px;height:1px;background:#d9d9d9"></div>
<div class="a" style="left:2558px;top:837px;width:1px;height:73px;background:#d9d9d9"></div>
<div class="a" style="left:2586px;top:837px;width:1px;height:73px;background:#d9d9d9"></div>
<div class="a" style="left:2614px;top:837px;width:1px;height:73px;background:#d9d9d9"></div>
<div class="a" style="left:2643px;top:837px;width:27px;height:73px;background:#000"></div>
<svg style="left:2530px;top:836px" width="120" height="76" viewBox="2530 836 120 76"><path d="M2535.4 855.0Q2544.6 846.2 2553.8 855.0Q2544.6 863.8 2535.4 855.0Z" fill="#fff" stroke="#111" stroke-width="1.5"/><circle cx="2544.6" cy="855.0" r="3.9" fill="#00fa7d" stroke="#111" stroke-width="1.2"/><circle cx="2544.6" cy="855.0" r="1.5" fill="#111" stroke="none" stroke-width="0"/><circle cx="2545.6" cy="853.8" r="0.7" fill="#fff" stroke="none" stroke-width="0"/><path d="M2568.6 854.5v-3.6a4.2 4.2 0 0 1 8.4 0v3.6" fill="none" stroke="#c6c6c6" stroke-width="1.5"/><rect x="2565.6" y="854.5" width="14.4" height="10.2" fill="#c6c6c6" stroke="none" stroke-width="0" rx="1"/><rect x="2592.6" y="852.2" width="17.6" height="9.4" fill="#000" stroke="none" stroke-width="1.2" rx="0"/><rect x="2597.1" y="845.7" width="8.9" height="6.9" fill="#00fa7d" stroke="#000" stroke-width="0.8580000000000001" rx="0"/><path d="M2597.8 853.9L2605.5 853.9L2606.5 857.3L2596.6 857.3Z" fill="#fff" stroke="none" stroke-width="0" /><path d="M2596.8 859.7L2606.0 859.7L2608.6 863.9L2594.5 863.9Z" fill="#00fa7d" stroke="#000" stroke-width="0.792" /><path d="M2625.4 846.5V864.5M2632.2 846.5V864.5M2619.8 852.1H2637.8M2619.8 858.9H2637.8" fill="none" stroke="#808080" stroke-width="2.6" /><path d="M2535.4 892.0Q2544.6 883.2 2553.8 892.0Q2544.6 900.8 2535.4 892.0Z" fill="#fff" stroke="#111" stroke-width="1.5"/><circle cx="2544.6" cy="892.0" r="3.9" fill="#00fa7d" stroke="#111" stroke-width="1.2"/><circle cx="2544.6" cy="892.0" r="1.5" fill="#111" stroke="none" stroke-width="0"/><circle cx="2545.6" cy="890.8" r="0.7" fill="#fff" stroke="none" stroke-width="0"/><path d="M2568.6 891.5v-3.6a4.2 4.2 0 0 1 8.4 0v3.6" fill="none" stroke="#c6c6c6" stroke-width="1.5"/><rect x="2565.6" y="891.5" width="14.4" height="10.2" fill="#c6c6c6" stroke="none" stroke-width="0" rx="1"/><rect x="2592.6" y="889.2" width="17.6" height="9.4" fill="#000" stroke="none" stroke-width="1.2" rx="0"/><rect x="2597.1" y="882.7" width="8.9" height="6.9" fill="#00fa7d" stroke="#000" stroke-width="0.8580000000000001" rx="0"/><path d="M2597.8 890.9L2605.5 890.9L2606.5 894.3L2596.6 894.3Z" fill="#fff" stroke="none" stroke-width="0" /><path d="M2596.8 896.7L2606.0 896.7L2608.6 900.9L2594.5 900.9Z" fill="#00fa7d" stroke="#000" stroke-width="0.792" /><path d="M2625.4 883.5V901.5M2632.2 883.5V901.5M2619.8 889.1H2637.8M2619.8 895.9H2637.8" fill="none" stroke="#808080" stroke-width="2.6" /></svg>
<div class="t" style="left:2673.0px;top:847.0px;font-size:18.5px;font-weight:bold;">0</div>
<div class="t" style="left:2673.4px;top:885.0px;font-size:18.3px;letter-spacing:-0.021px;">perimeter</div>
<div class="a" style="left:2530.4px;top:1409.5px;width:143px;height:23px;background:#f4f4f4;border:1px solid #e0e0e0;border-top:none"></div>
<div class="a" style="left:2675.6px;top:1409.5px;width:99px;height:23px;background:#f4f4f4;border:1px solid #e0e0e0;border-top:none"></div>
<div class="a" style="left:2776px;top:1408px;width:102px;height:26px;background:#fbfbfb;border-bottom:1px solid #e6e6e6"></div>
<div class="t" style="left:2545.1px;top:1414.0px;font-size:17.0px;letter-spacing:-0.475px;">Library Browser</div>
<div class="t" style="left:2691.9px;top:1414.0px;font-size:17.0px;letter-spacing:-0.495px;">Block List</div>
<div class="t" style="left:2794.4px;top:1415.0px;font-size:17.0px;letter-spacing:-0.520px;">Layer List</div>
<div class="a" style="left:2528px;top:1443.5px;width:352px;height:25px;background:#d9d9d9;border:1px solid #b4b4b4"></div>
<div class="t" style="left:2532.3px;top:1451.0px;font-size:17.4px;letter-spacing:0.377px;">Command line</div>
<svg style="left:2820px;top:1443.5px" width="60" height="27" viewBox="2820 1443.5 60 27"><path d="M2829.5 1454.8v-3.3h8.5v7h-2.6" fill="none" stroke="#333" stroke-width="1.6"/><rect x="2826.8" y="1455.2" width="7.6" height="6.2" fill="none" stroke="#333" stroke-width="1.6"/><path d="M2858 1452.2l9.6 9.8M2867.6 1452.2l-9.6 9.8" stroke="#222" stroke-width="2.4" fill="none"/></svg>
<div class="a" style="left:2530px;top:1475px;width:348px;height:90px;background:#fff;border-bottom:1px solid #868686"></div>
<div class="t" style="left:2532.9px;top:1482.0px;font-size:16.6px;letter-spacing:-0.203px;">Loaded document: C:\Users\willa\Downloads\s-</div>
<div class="t" style="left:2532.9px;top:1501.0px;font-size:16.6px;letter-spacing:-0.212px;">nelson_tan_sheet-1_run-1.dxf</div>
<div class="t" style="left:2528.2px;top:1569.0px;font-size:16.6px;letter-spacing:-0.172px;">Command:</div>
<div class="a" style="left:2532px;top:1590.5px;width:323px;height:23.5px;background:#fff"></div>
<div class="a" style="left:2858.5px;top:1594px;width:15px;height:15px;border:1px solid #d0d0d0;border-radius:4px;background:#fcfcfc"></div>
<svg style="left:2858px;top:1594px" width="18" height="18" viewBox="0 0 18 18"><path d="M5.5 5.5h6M5.5 8.5h6M5.5 11.5h6" stroke="#aaa" stroke-width="1" fill="none"/></svg>
<div class="a" style="left:773.5px;top:1602px;width:976.5px;height:5px;background:#8a8a8a;border-radius:2.5px"></div>
<div class="a" style="left:0px;top:1617px;width:2522px;height:1px;background:#828a94"></div>
<div class="a" style="left:0px;top:1618px;width:2880px;height:1px;background:#fcfcfc"></div>
<div class="a" style="left:48px;top:1591px;width:2448px;height:1px;background:#fff"></div>
<div class="a" style="left:2495px;top:146px;width:1px;height:1446px;background:#fff"></div>
<svg style="left:0px;top:1617px" width="1100" height="111" viewBox="0 1617 1100 111"><text x="23.2" y="1648.6" font-family="Liberation Sans,sans-serif" font-size="19.5" fill="#000">Ex</text><path d="M65 1640.3H91.5M77.6 1628V1654.6" fill="none" stroke="#111" stroke-width="1.0" stroke-dasharray="2 1.4"/><circle cx="111.5" cy="1629.2" r="2.1" fill="#00fa7d" stroke="#111" stroke-width="0.9"/><circle cx="111.5" cy="1637.0" r="2.1" fill="#00fa7d" stroke="#111" stroke-width="0.9"/><circle cx="111.5" cy="1644.8" r="2.1" fill="#00fa7d" stroke="#111" stroke-width="0.9"/><circle cx="111.5" cy="1652.6" r="2.1" fill="#00fa7d" stroke="#111" stroke-width="0.9"/><circle cx="121.0" cy="1629.2" r="2.1" fill="#00fa7d" stroke="#111" stroke-width="0.9"/><circle cx="121.0" cy="1637.0" r="2.1" fill="#00fa7d" stroke="#111" stroke-width="0.9"/><circle cx="121.0" cy="1644.8" r="2.1" fill="#00fa7d" stroke="#111" stroke-width="0.9"/><circle cx="121.0" cy="1652.6" r="2.1" fill="#00fa7d" stroke="#111" stroke-width="0.9"/><circle cx="130.5" cy="1629.2" r="2.1" fill="#00fa7d" stroke="#111" stroke-width="0.9"/><circle cx="130.5" cy="1637.0" r="2.1" fill="#00fa7d" stroke="#111" stroke-width="0.9"/><circle cx="130.5" cy="1644.8" r="2.1" fill="#00fa7d" stroke="#111" stroke-width="0.9"/><circle cx="130.5" cy="1652.6" r="2.1" fill="#00fa7d" stroke="#111" stroke-width="0.9"/><path d="M152.6 1635.4Q166 1638 169.4 1652.6M158.6 1628.6Q173 1634 176.2 1646.6" fill="none" stroke="#111" stroke-width="1.2" /><circle cx="152.6" cy="1635.4" r="2.7" fill="#00fa7d" stroke="#111" stroke-width="0.9"/><circle cx="169.4" cy="1652.6" r="2.7" fill="#00fa7d" stroke="#111" stroke-width="0.9"/><circle cx="158.6" cy="1628.6" r="2.7" fill="#00fa7d" stroke="#111" stroke-width="0.9"/><circle cx="176.2" cy="1646.6" r="2.7" fill="#00fa7d" stroke="#111" stroke-width="0.9"/><path d="M194.4 1637Q206 1638.5 211.4 1653.4M201.4 1628.6Q214 1634 219.4 1646.8" fill="none" stroke="#111" stroke-width="1.2" /><circle cx="194.4" cy="1637.0" r="2.6" fill="#00fa7d" stroke="#111" stroke-width="0.9"/><circle cx="201.4" cy="1628.6" r="2.6" fill="#00fa7d" stroke="#111" stroke-width="0.9"/><circle cx="207.4" cy="1634.4" r="2.6" fill="#00fa7d" stroke="#111" stroke-width="0.9"/><circle cx="206.4" cy="1642.0" r="2.6" fill="#00fa7d" stroke="#111" stroke-width="0.9"/><circle cx="213.8" cy="1641.0" r="2.6" fill="#00fa7d" stroke="#111" stroke-width="0.9"/><circle cx="219.4" cy="1646.8" r="2.6" fill="#00fa7d" stroke="#111" stroke-width="0.9"/><circle cx="211.4" cy="1653.4" r="2.6" fill="#00fa7d" stroke="#111" stroke-width="0.9"/><path d="M236.5 1635.6Q252 1637 255.4 1654.6M244 1626L264.6 1646.8" fill="none" stroke="#111" stroke-width="1.1" /><circle cx="238.6" cy="1652.2" r="2.6" fill="#00fa7d" stroke="#111" stroke-width="0.9"/><circle cx="254.6" cy="1636.6" r="2.6" fill="#00fa7d" stroke="#111" stroke-width="0.9"/><path d="M279.5 1635.6Q295 1637 298.4 1654.6M287 1626L307.6 1646.8" fill="none" stroke="#111" stroke-width="1.1" /><circle cx="292.4" cy="1641.6" r="2.7" fill="#00fa7d" stroke="#111" stroke-width="0.9"/><circle cx="297.2" cy="1636.8" r="2.7" fill="#00fa7d" stroke="#111" stroke-width="0.9"/><path d="M321.5 1637.6Q337 1639 340.4 1655.6M329 1627L349.6 1647.8" fill="none" stroke="#111" stroke-width="1.1" /><circle cx="336.0" cy="1634.0" r="2.4" fill="#00fa7d" stroke="#111" stroke-width="0.9"/><circle cx="338.2" cy="1647.6" r="2.4" fill="#00fa7d" stroke="#111" stroke-width="0.9"/><path d="M348.0 1630.6L348.0 1637.0L343.0 1633.8Z" fill="#00fa7d" stroke="#111" stroke-width="0.9" /><path d="M326.6 1645.0L326.6 1651.4L331.6 1648.2Z" fill="#00fa7d" stroke="#111" stroke-width="0.9" /><path d="M368 1630L389.6 1651.4M389.6 1630.6L368 1651.6" fill="none" stroke="#111" stroke-width="1.2" /><circle cx="379.0" cy="1641.0" r="2.7" fill="#00fa7d" stroke="#111" stroke-width="0.9"/><path d="M417 1637.8H445M417 1645H445" fill="none" stroke="#00fa7d" stroke-width="1.3" /><path d="M417.6 1641.4H444.4" fill="none" stroke="#111" stroke-width="1.2" /><circle cx="431.0" cy="1641.4" r="2.4" fill="#00fa7d" stroke="#111" stroke-width="0.9"/><path d="M469.6 1627V1654.6M476.8 1627V1654.6" fill="none" stroke="#00fa7d" stroke-width="1.3" /><path d="M473.2 1627.6V1654" fill="none" stroke="#111" stroke-width="1.2" /><circle cx="473.2" cy="1641.0" r="2.4" fill="#00fa7d" stroke="#111" stroke-width="0.9"/><path d="M503 1637.6H512.6V1628M520 1628V1637.6H530M503 1645H512.6V1655M520 1655V1645H530" fill="none" stroke="#00fa7d" stroke-width="1.3" /><path d="M503.4 1641.3H529.6M516.3 1628.4V1654.6" fill="none" stroke="#111" stroke-width="1.2" /><circle cx="516.3" cy="1641.3" r="2.4" fill="#00fa7d" stroke="#111" stroke-width="0.9"/><path d="M560 1638.6H583M572.8 1629.4V1652.6" fill="none" stroke="#111" stroke-width="1.0" /><circle cx="572.6" cy="1638.4" r="3.8" fill="#00fa7d" stroke="#111" stroke-width="1.0"/><path d="M556.2 1645.9L564.7 1637.9L570.7 1643.9L562.2 1652.2Z" fill="#fff" stroke="#111" stroke-width="1.1" /><path d="M562.7 1640.0l6 6M565.4 1642.4l4.4 -4.6" fill="none" stroke="#111" stroke-width="0.9" /><rect x="597.2" y="1629.2" width="12.0" height="11.0" fill="#000" stroke="none" stroke-width="1.2" rx="0"/><path d="M599.6 1629.4v-2a3.6 3.6 0 0 1 7.2 0v2" fill="none" stroke="#000" stroke-width="1.4" /><path d="M606 1643.2H629M618.8 1634V1657" fill="none" stroke="#111" stroke-width="1.0" /><circle cx="618.8" cy="1643.0" r="3.8" fill="#00fa7d" stroke="#111" stroke-width="1.0"/><path d="M602.4 1650.5L610.9 1642.5L616.9 1648.5L608.4 1656.8Z" fill="#fff" stroke="#111" stroke-width="1.1" /><path d="M608.9 1644.6l6 6M611.6 1647.0l4.4 -4.6" fill="none" stroke="#111" stroke-width="0.9" /><rect x="693.5" y="1620.5" width="42.5" height="40.0" fill="#cce4f7" stroke="#99c9ef" stroke-width="1" rx="3"/><rect x="658.8" y="1630.1" width="24.4" height="18.3" fill="#fff" stroke="none" stroke-width="0" rx="0"/><rect x="658.8" y="1630.1" width="5.7" height="18.3" fill="#00fa7d" stroke="none" stroke-width="1.2" rx="0"/><rect x="658.8" y="1630.1" width="24.4" height="18.3" fill="none" stroke="#111" stroke-width="1.5" rx="0"/><rect x="668.4" y="1648.4" width="5.2" height="2.6" fill="#111" stroke="none" stroke-width="1.2" rx="0"/><path d="M663.3 1651.6H678.7" fill="none" stroke="#111" stroke-width="1.3" /><rect x="702.7" y="1630.9" width="24.4" height="18.3" fill="#cce4f7" stroke="none" stroke-width="0" rx="0"/><rect x="721.4" y="1630.9" width="5.7" height="18.3" fill="#00fa7d" stroke="none" stroke-width="1.2" rx="0"/><rect x="702.7" y="1630.9" width="24.4" height="18.3" fill="none" stroke="#111" stroke-width="1.5" rx="0"/><rect x="712.3" y="1649.2" width="5.2" height="2.6" fill="#111" stroke="none" stroke-width="1.2" rx="0"/><path d="M707.2 1652.4H722.6" fill="none" stroke="#111" stroke-width="1.3" /><rect x="744.6" y="1630.1" width="24.4" height="18.3" fill="#fff" stroke="none" stroke-width="0" rx="0"/><rect x="744.6" y="1630.1" width="24.4" height="5.2" fill="#00fa7d" stroke="none" stroke-width="1.2" rx="0"/><rect x="744.6" y="1630.1" width="24.4" height="18.3" fill="none" stroke="#111" stroke-width="1.5" rx="0"/><rect x="754.2" y="1648.4" width="5.2" height="2.6" fill="#111" stroke="none" stroke-width="1.2" rx="0"/><path d="M749.1 1651.6H764.5" fill="none" stroke="#111" stroke-width="1.3" /><rect x="787.7" y="1630.1" width="24.4" height="18.3" fill="#fff" stroke="none" stroke-width="0" rx="0"/><rect x="787.7" y="1643.2" width="24.4" height="5.2" fill="#00fa7d" stroke="none" stroke-width="1.2" rx="0"/><rect x="787.7" y="1630.1" width="24.4" height="18.3" fill="none" stroke="#111" stroke-width="1.5" rx="0"/><rect x="797.3" y="1648.4" width="5.2" height="2.6" fill="#111" stroke="none" stroke-width="1.2" rx="0"/><path d="M792.2 1651.6H807.6" fill="none" stroke="#111" stroke-width="1.3" /><rect x="830.8" y="1630.1" width="24.4" height="18.3" fill="#fff" stroke="none" stroke-width="0" rx="0"/><rect x="835.2" y="1634.1" width="10.2" height="7.4" fill="#00fa7d" stroke="none" stroke-width="1.2" rx="0"/><rect x="830.8" y="1630.1" width="24.4" height="18.3" fill="none" stroke="#111" stroke-width="1.5" rx="0"/><rect x="840.4" y="1648.4" width="5.2" height="2.6" fill="#111" stroke="none" stroke-width="1.2" rx="0"/><path d="M835.3 1651.6H850.7" fill="none" stroke="#111" stroke-width="1.3" /><rect x="887.3" y="1640.1" width="13.2" height="4.2" fill="#000" stroke="none" stroke-width="1.2" rx="0"/><rect x="891.8" y="1635.6" width="4.2" height="13.2" fill="#000" stroke="none" stroke-width="1.2" rx="0"/><rect x="902.6" y="1628.0" width="13.6" height="27.0" fill="#fbfbfb" stroke="#aaa" stroke-width="1" rx="0"/><path d="M905.6 1633H913.2M905.6 1637.5H913.2M905.6 1642H913.2M905.6 1646.5H913.2M905.6 1651H913.2" fill="none" stroke="#999" stroke-width="1.0" /><rect x="930.3" y="1640.1" width="13.2" height="4.2" fill="#000" stroke="none" stroke-width="1.2" rx="0"/><rect x="934.8" y="1635.6" width="4.2" height="13.2" fill="#000" stroke="none" stroke-width="1.2" rx="0"/><rect x="945.3" y="1628.0" width="13.6" height="27.0" fill="#fbfbfb" stroke="#00fa7d" stroke-width="1.4" rx="0"/><path d="M945.3 1641.5H958.9" fill="none" stroke="#00fa7d" stroke-width="1.4" /><path d="M948.6 1638.4L955.8 1631.2" fill="none" stroke="#111" stroke-width="0.9" /><circle cx="952.2" cy="1648.4" r="3.6" fill="none" stroke="#111" stroke-width="0.9"/><path d="M513.5 1683.6C520 1690.5 521 1674 529.5 1674C536 1674 536.6 1679 536.6 1682" fill="none" stroke="#111" stroke-width="1.4" /><rect x="532.6" y="1681.8" width="30" height="42.6" rx="5.5" fill="#fff" stroke="#111" stroke-width="1.8"/><rect x="542.8" y="1682.8" width="9.2" height="14.2" fill="#00fa7d" stroke="#111" stroke-width="1.2" rx="0"/><path d="M532.6 1697.4H562.6" fill="none" stroke="#111" stroke-width="1.3" /></svg>
<div class="a" style="left:4px;top:1623px;width:2px;height:37px;background:repeating-linear-gradient(to bottom,#b4b4b4 0 2px,transparent 2px 4px)"></div>
<div class="a" style="left:405.5px;top:1625px;width:1px;height:36px;background:#c8c8c8"></div>
<div class="a" style="left:543px;top:1625px;width:1px;height:36px;background:#c8c8c8"></div>
<div class="a" style="left:635.5px;top:1619px;width:1px;height:46px;background:#b9b9b9"></div>
<div class="a" style="left:640px;top:1623px;width:2px;height:37px;background:repeating-linear-gradient(to bottom,#b4b4b4 0 2px,transparent 2px 4px)"></div>
<div class="a" style="left:866px;top:1619px;width:1px;height:46px;background:#b9b9b9"></div>
<div class="a" style="left:871px;top:1623px;width:2px;height:37px;background:repeating-linear-gradient(to bottom,#b4b4b4 0 2px,transparent 2px 4px)"></div>
<div class="a" style="left:181.5px;top:1667px;width:1px;height:61px;background:#c4c4c4"></div>
<div class="a" style="left:383.5px;top:1667px;width:1px;height:61px;background:#c4c4c4"></div>
<div class="a" style="left:689px;top:1667px;width:1px;height:61px;background:#c4c4c4"></div>
<div class="a" style="left:860.5px;top:1667px;width:1px;height:61px;background:#c4c4c4"></div>
<div class="a" style="left:978px;top:1667px;width:1px;height:61px;background:#c4c4c4"></div>
<div class="a" style="left:1078px;top:1667px;width:1px;height:61px;background:#c4c4c4"></div>
<div class="t" style="left:5.7px;top:1676.0px;font-size:17.2px;letter-spacing:0.347px;">-39.6600 , -0.1269</div>
<div class="t" style="left:5.7px;top:1705.0px;font-size:17.2px;letter-spacing:0.401px;">39.6602 &lt; 180.1833°</div>
<div class="t" style="left:188.3px;top:1677.0px;font-size:14.6px;">@</div>
<div class="t" style="left:214.7px;top:1676.0px;font-size:17.2px;letter-spacing:0.336px;">-39.6600 , -0.1269</div>
<div class="t" style="left:188.3px;top:1707.0px;font-size:14.6px;">@</div>
<div class="t" style="left:214.7px;top:1705.0px;font-size:17.2px;letter-spacing:0.385px;">39.6602 &lt; 180.1833°</div>
<div class="t" style="left:694.1px;top:1675.0px;font-size:17.2px;letter-spacing:-0.017px;">Selected</div>
<div class="t" style="left:761.3px;top:1675.0px;font-size:17.2px;letter-spacing:0.257px;">Total Length</div>
<div class="t" style="left:864.4px;top:1675.0px;font-size:17.2px;letter-spacing:0.012px;">Current Layer</div>
<div class="t" style="left:986.1px;top:1675.0px;font-size:17.2px;letter-spacing:0.097px;">Grid Status</div>
<div class="t" style="left:694.0px;top:1704.0px;font-size:17.2px;">0</div>
<div class="t" style="left:761.0px;top:1704.0px;font-size:17.2px;">0</div>
<div class="t" style="left:864.3px;top:1704.0px;font-size:17.2px;">0</div>
<div class="t" style="left:987.0px;top:1704.0px;font-size:17.2px;letter-spacing:0.745px;">1 / 10</div></body></html>
